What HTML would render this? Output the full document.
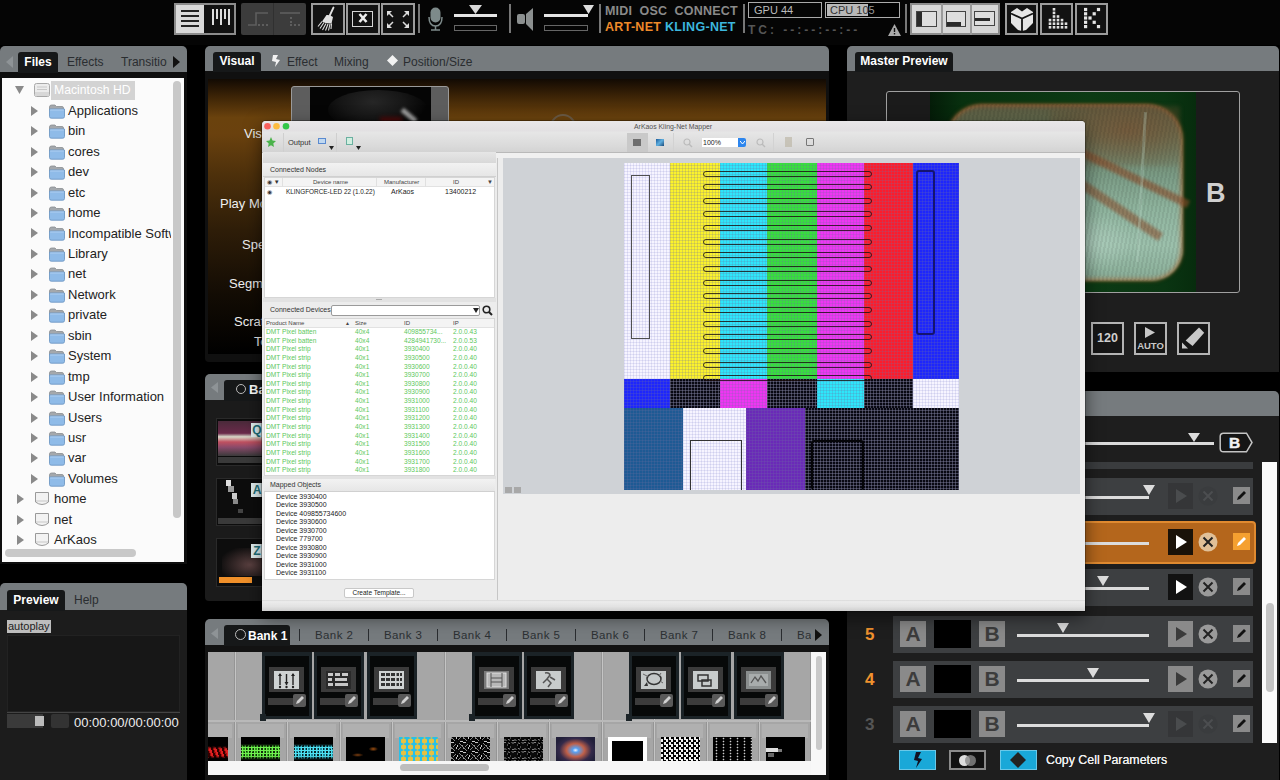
<!DOCTYPE html>
<html><head><meta charset="utf-8">
<style>
*{margin:0;padding:0;box-sizing:border-box}
html,body{width:1280px;height:780px;overflow:hidden;background:#000;font-family:"Liberation Sans",sans-serif}
.a{position:absolute}
.hdr{position:absolute;background:#767b7e;border-radius:5px 5px 0 0}
.tab{position:absolute;background:#161819;color:#fff;font-weight:bold;font-size:12px;text-align:center;border-radius:3px 3px 0 0}
.tt{position:absolute;color:#2a2d30;font-size:12px}
.tb{position:absolute;border:2px solid #9c9c9c;background:#121212}
</style></head><body>
<!-- ============ TOP TOOLBAR ============ -->
<div class="a" style="left:0;top:0;width:1280px;height:45px;background:#050505"></div>
<!-- group1 -->
<div class="a" style="left:174px;top:3px;width:62px;height:32px;border:2px solid #8c8c8c;background:#111"></div>
<div class="a" style="left:176px;top:5px;width:28px;height:28px;background:#d9d9d9"></div>
<div class="a" style="left:181px;top:10px;width:18px;height:2px;background:#222"></div>
<div class="a" style="left:181px;top:15px;width:18px;height:2px;background:#222"></div>
<div class="a" style="left:181px;top:20px;width:18px;height:2px;background:#222"></div>
<div class="a" style="left:181px;top:25px;width:18px;height:2px;background:#222"></div>
<div class="a" style="left:212px;top:9px;width:2px;height:16px;background:#ddd"></div>
<div class="a" style="left:216px;top:9px;width:2px;height:10px;background:#ddd"></div>
<div class="a" style="left:220px;top:9px;width:2px;height:16px;background:#ddd"></div>
<div class="a" style="left:224px;top:9px;width:2px;height:10px;background:#ddd"></div>
<div class="a" style="left:228px;top:9px;width:2px;height:16px;background:#ddd"></div>
<!-- group2 disabled -->
<div class="a" style="left:241px;top:3px;width:65px;height:32px;background:#3c3c3c;border-radius:2px"></div>
<div class="a" style="left:273px;top:3px;width:1px;height:32px;background:#303030"></div>
<svg class="a" style="left:241px;top:3px" width="65" height="32"><g stroke="#5e5e5e" stroke-width="1.6" fill="none"><path d="M7 22 L15 22 L15 10 L27 10"/><path d="M39 10 L59 10"/></g><g fill="#5e5e5e"><rect x="17" y="21" width="2" height="2"/><rect x="21" y="21" width="2" height="2"/><rect x="25" y="21" width="2" height="2"/><rect x="49" y="14" width="2" height="2"/><rect x="49" y="18" width="2" height="2"/><rect x="49" y="21" width="2" height="2"/><rect x="53" y="21" width="2" height="2"/><rect x="57" y="21" width="2" height="2"/></g></svg>
<!-- broom, x, expand -->
<div class="tb" style="left:311px;top:3px;width:34px;height:32px"></div>
<svg class="a" style="left:311px;top:3px" width="34" height="32"><path d="M22.5 4.5 L18.5 13" stroke="#e0e0e0" stroke-width="1.8" stroke-linecap="round"/><path d="M15.5 12 Q19 11.5 22 14 L20.5 20.5 Q15 21 11 18.5 Z" fill="#e0e0e0"/><g stroke="#e0e0e0" stroke-width="1.1"><path d="M11 18.5 L7 23.5 M13 19.5 L9 25.5 M15 20.5 L11.5 27 M17 21 L14.5 27.5 M19 21 L17.5 27.5 M20.5 20.5 L20 26"/></g></svg>
<div class="tb" style="left:346px;top:3px;width:34px;height:32px"></div>
<div class="a" style="left:352px;top:11px;width:21px;height:16px;border:1.6px solid #d6d6d6"></div>
<svg class="a" style="left:346px;top:3px" width="34" height="32"><path d="M13.5 11 L20.5 19 M20.5 11 L13.5 19" stroke="#eee" stroke-width="2.6"/></svg>
<div class="tb" style="left:381px;top:3px;width:34px;height:32px"></div>
<svg class="a" style="left:381px;top:3px" width="34" height="32"><g stroke="#dedede" stroke-width="1.5" fill="none"><path d="M7 9 L12 14 M27 9 L22 14 M7 24 L12 19 M27 24 L22 19"/></g><g fill="#dedede"><path d="M6 8 L11 8 L6 13 Z"/><path d="M28 8 L23 8 L28 13 Z"/><path d="M6 25 L11 25 L6 20 Z"/><path d="M28 25 L23 25 L28 20 Z"/></g></svg>
<div class="a" style="left:418px;top:4px;width:2px;height:29px;background:#777"></div>
<!-- mic -->
<svg class="a" style="left:426px;top:6px" width="20" height="26"><rect x="4.5" y="1.5" width="10" height="15" rx="5" fill="#7d8a8a"/><path d="M3 11 Q3 20 9.5 20 Q16 20 16 11" stroke="#7d8a8a" stroke-width="1.5" fill="none"/><path d="M9.5 20 L9.5 24 M5 24 L14 24" stroke="#7d8a8a" stroke-width="1.5"/></svg>
<div class="a" style="left:454px;top:14px;width:43px;height:3px;background:#e6e6e6"></div>
<svg class="a" style="left:469px;top:5px" width="13" height="9"><path d="M0 0 L13 0 L6.5 9 Z" fill="#d8d8d8"/></svg>
<div class="a" style="left:454px;top:25px;width:43px;height:6px;border:1px solid #666"></div>
<div class="a" style="left:509px;top:4px;width:2px;height:29px;background:#777"></div>
<!-- speaker -->
<svg class="a" style="left:516px;top:6px" width="20" height="26"><rect x="1" y="8" width="8" height="10" rx="2" fill="#8c9090"/><path d="M10 8 L17 2 L17 25 L10 18 Z" fill="#8c9090"/></svg>
<div class="a" style="left:544px;top:14px;width:44px;height:3px;background:#e6e6e6"></div>
<svg class="a" style="left:583px;top:5px" width="12" height="10"><path d="M0 0 L11 0 L5.5 9 Z" fill="#ddd"/></svg>
<div class="a" style="left:544px;top:25px;width:44px;height:6px;border:1px solid #666"></div>
<div class="a" style="left:599px;top:4px;width:2px;height:29px;background:#777"></div>
<div class="a" style="left:605px;top:4px;font-size:12.5px;font-weight:bold;color:#8a8a8a;letter-spacing:0.2px;white-space:nowrap">MIDI&nbsp; OSC&nbsp; CONNECT</div>
<div class="a" style="left:605px;top:20px;font-size:12.5px;font-weight:bold;color:#f08a2a;letter-spacing:0.3px;white-space:nowrap">ART-NET <span style="color:#3cb7de">KLING-NET</span></div>
<div class="a" style="left:743px;top:4px;width:2px;height:29px;background:#777"></div>
<div class="a" style="left:748px;top:2px;width:74px;height:16px;border:1px solid #aaa;color:#bbb;font-size:11px;line-height:14px;padding-left:5px">GPU 44</div>
<div class="a" style="left:825px;top:2px;width:75px;height:16px;border:1px solid #aaa;background:#000"></div>
<div class="a" style="left:827px;top:4px;width:41px;height:12px;background:#b8b8b8"></div>
<div class="a" style="left:825px;top:2px;width:75px;height:16px;color:#333;font-size:11px;line-height:16px;padding-left:5px">CPU 10<span style="color:#999">5</span></div>
<div class="a" style="left:748px;top:23px;font-size:12px;color:#555;font-weight:bold;letter-spacing:3px;white-space:nowrap">TC: --:--:--:--</div>
<svg class="a" style="left:888px;top:24px" width="13" height="12"><path d="M6.5 0 L13 12 L0 12 Z" fill="#aaa"/><rect x="5.8" y="4" width="1.4" height="4" fill="#111"/><rect x="5.8" y="9" width="1.4" height="1.4" fill="#111"/></svg>
<div class="a" style="left:905px;top:4px;width:2px;height:29px;background:#777"></div>
<!-- group3 -->
<div class="a" style="left:910px;top:3px;width:90px;height:32px;border:2px solid #8c8c8c;background:#d6d6d6"></div>
<div class="a" style="left:941px;top:3px;width:2px;height:32px;background:#9a9a9a"></div>
<div class="a" style="left:970px;top:3px;width:2px;height:32px;background:#9a9a9a"></div>
<div class="a" style="left:916px;top:11px;width:21px;height:16px;border:1px solid #444;background:#dedede"></div>
<div class="a" style="left:917px;top:12px;width:5px;height:14px;background:#2a2a2a"></div>
<div class="a" style="left:946px;top:11px;width:20px;height:16px;border:1px solid #444;background:#dedede"></div>
<div class="a" style="left:947px;top:22px;width:14px;height:4px;background:#2a2a2a"></div>
<div class="a" style="left:974px;top:11px;width:21px;height:15px;border:1px solid #444;background:#dedede"></div>
<div class="a" style="left:975px;top:18px;width:15px;height:3px;background:#2a2a2a"></div>
<div class="tb" style="left:1005px;top:3px;width:33px;height:32px"></div>
<svg class="a" style="left:1005px;top:3px" width="33" height="32"><path d="M6 9 L12 5 L17 8.5 L22 5 L28 9 L28 20 L21 27 L17 28 L13 27 L6 20 Z" fill="#e6e6e6"/><path d="M6 10.5 L17 15.5 L28 10.5 M17 15.5 L17 28" stroke="#151515" stroke-width="1.8" fill="none"/></svg>
<div class="tb" style="left:1040px;top:3px;width:33px;height:32px"></div>
<svg class="a" style="left:1040px;top:3px" width="33" height="32"><g fill="#e0e0e0"><rect x="8.7" y="23.0" width="2.6" height="2.6"/><rect x="8.7" y="19.4" width="2.6" height="2.6"/><rect x="8.7" y="15.8" width="2.6" height="2.6"/><rect x="12.7" y="23.0" width="2.6" height="2.6"/><rect x="12.7" y="19.4" width="2.6" height="2.6"/><rect x="12.7" y="15.8" width="2.6" height="2.6"/><rect x="12.7" y="12.2" width="2.6" height="2.6"/><rect x="12.7" y="8.6" width="2.6" height="2.6"/><rect x="12.7" y="5.0" width="2.6" height="2.6"/><rect x="16.7" y="23.0" width="2.6" height="2.6"/><rect x="16.7" y="19.4" width="2.6" height="2.6"/><rect x="16.7" y="15.8" width="2.6" height="2.6"/><rect x="16.7" y="12.2" width="2.6" height="2.6"/><rect x="20.7" y="23.0" width="2.6" height="2.6"/><rect x="20.7" y="19.4" width="2.6" height="2.6"/><rect x="20.7" y="15.8" width="2.6" height="2.6"/><rect x="24.7" y="23.0" width="2.6" height="2.6"/><rect x="24.7" y="19.4" width="2.6" height="2.6"/></g></svg>
<div class="tb" style="left:1075px;top:3px;width:33px;height:32px"></div>
<svg class="a" style="left:1075px;top:3px" width="33" height="32"><g fill="#e6e6e6"><rect x="9.0" y="4.9" width="3.2" height="3.2"/><rect x="9.0" y="9.2" width="3.2" height="3.2"/><rect x="9.0" y="13.4" width="3.2" height="3.2"/><rect x="9.0" y="17.7" width="3.2" height="3.2"/><rect x="9.0" y="22.0" width="3.2" height="3.2"/><rect x="13.4" y="13.4" width="3.2" height="3.2"/><rect x="17.6" y="9.2" width="3.2" height="3.2"/><rect x="21.9" y="4.9" width="3.2" height="3.2"/><rect x="17.6" y="17.7" width="3.2" height="3.2"/><rect x="21.9" y="22.0" width="3.2" height="3.2"/></g></svg>

<!-- ============ LEFT FILES PANEL ============ -->
<div class="hdr" style="left:0;top:46px;width:187px;height:27px"></div>
<div class="a" style="left:0;top:72px;width:187px;height:492px;background:#0e0e0e"></div>
<svg class="a" style="left:6px;top:56px" width="8" height="12"><path d="M7 0 L0 6 L7 12 Z" fill="#8e9396"/></svg>
<div class="tab" style="left:18px;top:52px;width:40px;height:21px;line-height:20px">Files</div>
<div class="tt" style="left:67px;top:55px">Effects</div>
<div class="tt" style="left:121px;top:55px">Transition</div>
<div class="a" style="left:167px;top:52px;width:18px;height:20px;background:#767b7e"></div>
<svg class="a" style="left:173px;top:56px" width="7" height="12"><path d="M0 0 L7 6 L0 12 Z" fill="#111"/></svg>
<div class="a" style="left:2px;top:78px;width:182px;height:484px;background:#fbfbfb"></div>
<div class="a" style="left:173px;top:81px;width:8px;height:437px;background:#c8c8c8;border-radius:4px"></div>
<div class="a" style="left:5px;top:549px;width:131px;height:8px;background:#c8c8c8;border-radius:4px"></div>
<div class="a" style="left:0;top:0;width:171px;height:548px;overflow:hidden">
<svg class="a" style="left:15px;top:86px" width="10" height="9"><path d="M0 0 L9 0 L4.5 8 Z" fill="#8a8a8a"/></svg>
<svg class="a" style="left:34px;top:83px" width="16" height="14"><rect x="0.5" y="0.5" width="15" height="13" rx="2" fill="#ececec" stroke="#a8a8a8"/><path d="M3 4 L13 4 M3 6.5 L13 6.5" stroke="#c8c8c8" stroke-width="1"/><rect x="1" y="9" width="14" height="4" fill="#d8d8d8"/></svg>
<div class="a" style="left:51px;top:81px;width:84px;height:19px;background:#d3d3d3"></div>
<div class="a" style="left:54px;top:82px;font-size:12.2px;color:#fff;white-space:nowrap;line-height:17px">Macintosh HD</div>
<svg class="a" style="left:31px;top:106px" width="8" height="10"><path d="M0 0 L7 5 L0 10 Z" fill="#8a8a8a"/></svg>
<svg class="a" style="left:49px;top:104px" width="16" height="15"><path d="M0.5 3 Q0.5 1 2.5 1 L6 1 L7.5 2.5 L13 2.5 Q14.5 2.5 14.5 4 L14.5 6 L0.5 6 Z" fill="#a4a8ac" stroke="#8a8e92" stroke-width="0.8"/><path d="M0.5 5 L15.5 5 L15.5 12.5 Q15.5 14.2 13.8 14.2 L2.2 14.2 Q0.5 14.2 0.5 12.5 Z" fill="#8fbbe8" stroke="#6f98c4" stroke-width="0.9"/><path d="M1.2 6 L14.8 6" stroke="#b4d4f4" stroke-width="0.9"/></svg>
<div class="a" style="left:68px;top:103px;font-size:13px;color:#222;white-space:nowrap;line-height:16px">Applications</div>
<svg class="a" style="left:31px;top:126px" width="8" height="10"><path d="M0 0 L7 5 L0 10 Z" fill="#8a8a8a"/></svg>
<svg class="a" style="left:49px;top:124px" width="16" height="15"><path d="M0.5 3 Q0.5 1 2.5 1 L6 1 L7.5 2.5 L13 2.5 Q14.5 2.5 14.5 4 L14.5 6 L0.5 6 Z" fill="#a4a8ac" stroke="#8a8e92" stroke-width="0.8"/><path d="M0.5 5 L15.5 5 L15.5 12.5 Q15.5 14.2 13.8 14.2 L2.2 14.2 Q0.5 14.2 0.5 12.5 Z" fill="#8fbbe8" stroke="#6f98c4" stroke-width="0.9"/><path d="M1.2 6 L14.8 6" stroke="#b4d4f4" stroke-width="0.9"/></svg>
<div class="a" style="left:68px;top:123px;font-size:13px;color:#222;white-space:nowrap;line-height:16px">bin</div>
<svg class="a" style="left:31px;top:147px" width="8" height="10"><path d="M0 0 L7 5 L0 10 Z" fill="#8a8a8a"/></svg>
<svg class="a" style="left:49px;top:145px" width="16" height="15"><path d="M0.5 3 Q0.5 1 2.5 1 L6 1 L7.5 2.5 L13 2.5 Q14.5 2.5 14.5 4 L14.5 6 L0.5 6 Z" fill="#a4a8ac" stroke="#8a8e92" stroke-width="0.8"/><path d="M0.5 5 L15.5 5 L15.5 12.5 Q15.5 14.2 13.8 14.2 L2.2 14.2 Q0.5 14.2 0.5 12.5 Z" fill="#8fbbe8" stroke="#6f98c4" stroke-width="0.9"/><path d="M1.2 6 L14.8 6" stroke="#b4d4f4" stroke-width="0.9"/></svg>
<div class="a" style="left:68px;top:144px;font-size:13px;color:#222;white-space:nowrap;line-height:16px">cores</div>
<svg class="a" style="left:31px;top:167px" width="8" height="10"><path d="M0 0 L7 5 L0 10 Z" fill="#8a8a8a"/></svg>
<svg class="a" style="left:49px;top:165px" width="16" height="15"><path d="M0.5 3 Q0.5 1 2.5 1 L6 1 L7.5 2.5 L13 2.5 Q14.5 2.5 14.5 4 L14.5 6 L0.5 6 Z" fill="#a4a8ac" stroke="#8a8e92" stroke-width="0.8"/><path d="M0.5 5 L15.5 5 L15.5 12.5 Q15.5 14.2 13.8 14.2 L2.2 14.2 Q0.5 14.2 0.5 12.5 Z" fill="#8fbbe8" stroke="#6f98c4" stroke-width="0.9"/><path d="M1.2 6 L14.8 6" stroke="#b4d4f4" stroke-width="0.9"/></svg>
<div class="a" style="left:68px;top:164px;font-size:13px;color:#222;white-space:nowrap;line-height:16px">dev</div>
<svg class="a" style="left:31px;top:188px" width="8" height="10"><path d="M0 0 L7 5 L0 10 Z" fill="#8a8a8a"/></svg>
<svg class="a" style="left:49px;top:186px" width="16" height="15"><path d="M0.5 3 Q0.5 1 2.5 1 L6 1 L7.5 2.5 L13 2.5 Q14.5 2.5 14.5 4 L14.5 6 L0.5 6 Z" fill="#a4a8ac" stroke="#8a8e92" stroke-width="0.8"/><path d="M0.5 5 L15.5 5 L15.5 12.5 Q15.5 14.2 13.8 14.2 L2.2 14.2 Q0.5 14.2 0.5 12.5 Z" fill="#8fbbe8" stroke="#6f98c4" stroke-width="0.9"/><path d="M1.2 6 L14.8 6" stroke="#b4d4f4" stroke-width="0.9"/></svg>
<div class="a" style="left:68px;top:185px;font-size:13px;color:#222;white-space:nowrap;line-height:16px">etc</div>
<svg class="a" style="left:31px;top:208px" width="8" height="10"><path d="M0 0 L7 5 L0 10 Z" fill="#8a8a8a"/></svg>
<svg class="a" style="left:49px;top:206px" width="16" height="15"><path d="M0.5 3 Q0.5 1 2.5 1 L6 1 L7.5 2.5 L13 2.5 Q14.5 2.5 14.5 4 L14.5 6 L0.5 6 Z" fill="#a4a8ac" stroke="#8a8e92" stroke-width="0.8"/><path d="M0.5 5 L15.5 5 L15.5 12.5 Q15.5 14.2 13.8 14.2 L2.2 14.2 Q0.5 14.2 0.5 12.5 Z" fill="#8fbbe8" stroke="#6f98c4" stroke-width="0.9"/><path d="M1.2 6 L14.8 6" stroke="#b4d4f4" stroke-width="0.9"/></svg>
<div class="a" style="left:68px;top:205px;font-size:13px;color:#222;white-space:nowrap;line-height:16px">home</div>
<svg class="a" style="left:31px;top:228px" width="8" height="10"><path d="M0 0 L7 5 L0 10 Z" fill="#8a8a8a"/></svg>
<svg class="a" style="left:49px;top:226px" width="16" height="15"><path d="M0.5 3 Q0.5 1 2.5 1 L6 1 L7.5 2.5 L13 2.5 Q14.5 2.5 14.5 4 L14.5 6 L0.5 6 Z" fill="#a4a8ac" stroke="#8a8e92" stroke-width="0.8"/><path d="M0.5 5 L15.5 5 L15.5 12.5 Q15.5 14.2 13.8 14.2 L2.2 14.2 Q0.5 14.2 0.5 12.5 Z" fill="#8fbbe8" stroke="#6f98c4" stroke-width="0.9"/><path d="M1.2 6 L14.8 6" stroke="#b4d4f4" stroke-width="0.9"/></svg>
<div class="a" style="left:68px;top:226px;font-size:13px;color:#222;white-space:nowrap;line-height:16px">Incompatible Software</div>
<svg class="a" style="left:31px;top:249px" width="8" height="10"><path d="M0 0 L7 5 L0 10 Z" fill="#8a8a8a"/></svg>
<svg class="a" style="left:49px;top:247px" width="16" height="15"><path d="M0.5 3 Q0.5 1 2.5 1 L6 1 L7.5 2.5 L13 2.5 Q14.5 2.5 14.5 4 L14.5 6 L0.5 6 Z" fill="#a4a8ac" stroke="#8a8e92" stroke-width="0.8"/><path d="M0.5 5 L15.5 5 L15.5 12.5 Q15.5 14.2 13.8 14.2 L2.2 14.2 Q0.5 14.2 0.5 12.5 Z" fill="#8fbbe8" stroke="#6f98c4" stroke-width="0.9"/><path d="M1.2 6 L14.8 6" stroke="#b4d4f4" stroke-width="0.9"/></svg>
<div class="a" style="left:68px;top:246px;font-size:13px;color:#222;white-space:nowrap;line-height:16px">Library</div>
<svg class="a" style="left:31px;top:269px" width="8" height="10"><path d="M0 0 L7 5 L0 10 Z" fill="#8a8a8a"/></svg>
<svg class="a" style="left:49px;top:267px" width="16" height="15"><path d="M0.5 3 Q0.5 1 2.5 1 L6 1 L7.5 2.5 L13 2.5 Q14.5 2.5 14.5 4 L14.5 6 L0.5 6 Z" fill="#a4a8ac" stroke="#8a8e92" stroke-width="0.8"/><path d="M0.5 5 L15.5 5 L15.5 12.5 Q15.5 14.2 13.8 14.2 L2.2 14.2 Q0.5 14.2 0.5 12.5 Z" fill="#8fbbe8" stroke="#6f98c4" stroke-width="0.9"/><path d="M1.2 6 L14.8 6" stroke="#b4d4f4" stroke-width="0.9"/></svg>
<div class="a" style="left:68px;top:266px;font-size:13px;color:#222;white-space:nowrap;line-height:16px">net</div>
<svg class="a" style="left:31px;top:290px" width="8" height="10"><path d="M0 0 L7 5 L0 10 Z" fill="#8a8a8a"/></svg>
<svg class="a" style="left:49px;top:288px" width="16" height="15"><path d="M0.5 3 Q0.5 1 2.5 1 L6 1 L7.5 2.5 L13 2.5 Q14.5 2.5 14.5 4 L14.5 6 L0.5 6 Z" fill="#a4a8ac" stroke="#8a8e92" stroke-width="0.8"/><path d="M0.5 5 L15.5 5 L15.5 12.5 Q15.5 14.2 13.8 14.2 L2.2 14.2 Q0.5 14.2 0.5 12.5 Z" fill="#8fbbe8" stroke="#6f98c4" stroke-width="0.9"/><path d="M1.2 6 L14.8 6" stroke="#b4d4f4" stroke-width="0.9"/></svg>
<div class="a" style="left:68px;top:287px;font-size:13px;color:#222;white-space:nowrap;line-height:16px">Network</div>
<svg class="a" style="left:31px;top:310px" width="8" height="10"><path d="M0 0 L7 5 L0 10 Z" fill="#8a8a8a"/></svg>
<svg class="a" style="left:49px;top:308px" width="16" height="15"><path d="M0.5 3 Q0.5 1 2.5 1 L6 1 L7.5 2.5 L13 2.5 Q14.5 2.5 14.5 4 L14.5 6 L0.5 6 Z" fill="#a4a8ac" stroke="#8a8e92" stroke-width="0.8"/><path d="M0.5 5 L15.5 5 L15.5 12.5 Q15.5 14.2 13.8 14.2 L2.2 14.2 Q0.5 14.2 0.5 12.5 Z" fill="#8fbbe8" stroke="#6f98c4" stroke-width="0.9"/><path d="M1.2 6 L14.8 6" stroke="#b4d4f4" stroke-width="0.9"/></svg>
<div class="a" style="left:68px;top:307px;font-size:13px;color:#222;white-space:nowrap;line-height:16px">private</div>
<svg class="a" style="left:31px;top:331px" width="8" height="10"><path d="M0 0 L7 5 L0 10 Z" fill="#8a8a8a"/></svg>
<svg class="a" style="left:49px;top:329px" width="16" height="15"><path d="M0.5 3 Q0.5 1 2.5 1 L6 1 L7.5 2.5 L13 2.5 Q14.5 2.5 14.5 4 L14.5 6 L0.5 6 Z" fill="#a4a8ac" stroke="#8a8e92" stroke-width="0.8"/><path d="M0.5 5 L15.5 5 L15.5 12.5 Q15.5 14.2 13.8 14.2 L2.2 14.2 Q0.5 14.2 0.5 12.5 Z" fill="#8fbbe8" stroke="#6f98c4" stroke-width="0.9"/><path d="M1.2 6 L14.8 6" stroke="#b4d4f4" stroke-width="0.9"/></svg>
<div class="a" style="left:68px;top:328px;font-size:13px;color:#222;white-space:nowrap;line-height:16px">sbin</div>
<svg class="a" style="left:31px;top:351px" width="8" height="10"><path d="M0 0 L7 5 L0 10 Z" fill="#8a8a8a"/></svg>
<svg class="a" style="left:49px;top:349px" width="16" height="15"><path d="M0.5 3 Q0.5 1 2.5 1 L6 1 L7.5 2.5 L13 2.5 Q14.5 2.5 14.5 4 L14.5 6 L0.5 6 Z" fill="#a4a8ac" stroke="#8a8e92" stroke-width="0.8"/><path d="M0.5 5 L15.5 5 L15.5 12.5 Q15.5 14.2 13.8 14.2 L2.2 14.2 Q0.5 14.2 0.5 12.5 Z" fill="#8fbbe8" stroke="#6f98c4" stroke-width="0.9"/><path d="M1.2 6 L14.8 6" stroke="#b4d4f4" stroke-width="0.9"/></svg>
<div class="a" style="left:68px;top:348px;font-size:13px;color:#222;white-space:nowrap;line-height:16px">System</div>
<svg class="a" style="left:31px;top:372px" width="8" height="10"><path d="M0 0 L7 5 L0 10 Z" fill="#8a8a8a"/></svg>
<svg class="a" style="left:49px;top:370px" width="16" height="15"><path d="M0.5 3 Q0.5 1 2.5 1 L6 1 L7.5 2.5 L13 2.5 Q14.5 2.5 14.5 4 L14.5 6 L0.5 6 Z" fill="#a4a8ac" stroke="#8a8e92" stroke-width="0.8"/><path d="M0.5 5 L15.5 5 L15.5 12.5 Q15.5 14.2 13.8 14.2 L2.2 14.2 Q0.5 14.2 0.5 12.5 Z" fill="#8fbbe8" stroke="#6f98c4" stroke-width="0.9"/><path d="M1.2 6 L14.8 6" stroke="#b4d4f4" stroke-width="0.9"/></svg>
<div class="a" style="left:68px;top:369px;font-size:13px;color:#222;white-space:nowrap;line-height:16px">tmp</div>
<svg class="a" style="left:31px;top:392px" width="8" height="10"><path d="M0 0 L7 5 L0 10 Z" fill="#8a8a8a"/></svg>
<svg class="a" style="left:49px;top:390px" width="16" height="15"><path d="M0.5 3 Q0.5 1 2.5 1 L6 1 L7.5 2.5 L13 2.5 Q14.5 2.5 14.5 4 L14.5 6 L0.5 6 Z" fill="#a4a8ac" stroke="#8a8e92" stroke-width="0.8"/><path d="M0.5 5 L15.5 5 L15.5 12.5 Q15.5 14.2 13.8 14.2 L2.2 14.2 Q0.5 14.2 0.5 12.5 Z" fill="#8fbbe8" stroke="#6f98c4" stroke-width="0.9"/><path d="M1.2 6 L14.8 6" stroke="#b4d4f4" stroke-width="0.9"/></svg>
<div class="a" style="left:68px;top:389px;font-size:13px;color:#222;white-space:nowrap;line-height:16px">User Information</div>
<svg class="a" style="left:31px;top:413px" width="8" height="10"><path d="M0 0 L7 5 L0 10 Z" fill="#8a8a8a"/></svg>
<svg class="a" style="left:49px;top:411px" width="16" height="15"><path d="M0.5 3 Q0.5 1 2.5 1 L6 1 L7.5 2.5 L13 2.5 Q14.5 2.5 14.5 4 L14.5 6 L0.5 6 Z" fill="#a4a8ac" stroke="#8a8e92" stroke-width="0.8"/><path d="M0.5 5 L15.5 5 L15.5 12.5 Q15.5 14.2 13.8 14.2 L2.2 14.2 Q0.5 14.2 0.5 12.5 Z" fill="#8fbbe8" stroke="#6f98c4" stroke-width="0.9"/><path d="M1.2 6 L14.8 6" stroke="#b4d4f4" stroke-width="0.9"/></svg>
<div class="a" style="left:68px;top:410px;font-size:13px;color:#222;white-space:nowrap;line-height:16px">Users</div>
<svg class="a" style="left:31px;top:433px" width="8" height="10"><path d="M0 0 L7 5 L0 10 Z" fill="#8a8a8a"/></svg>
<svg class="a" style="left:49px;top:431px" width="16" height="15"><path d="M0.5 3 Q0.5 1 2.5 1 L6 1 L7.5 2.5 L13 2.5 Q14.5 2.5 14.5 4 L14.5 6 L0.5 6 Z" fill="#a4a8ac" stroke="#8a8e92" stroke-width="0.8"/><path d="M0.5 5 L15.5 5 L15.5 12.5 Q15.5 14.2 13.8 14.2 L2.2 14.2 Q0.5 14.2 0.5 12.5 Z" fill="#8fbbe8" stroke="#6f98c4" stroke-width="0.9"/><path d="M1.2 6 L14.8 6" stroke="#b4d4f4" stroke-width="0.9"/></svg>
<div class="a" style="left:68px;top:430px;font-size:13px;color:#222;white-space:nowrap;line-height:16px">usr</div>
<svg class="a" style="left:31px;top:453px" width="8" height="10"><path d="M0 0 L7 5 L0 10 Z" fill="#8a8a8a"/></svg>
<svg class="a" style="left:49px;top:451px" width="16" height="15"><path d="M0.5 3 Q0.5 1 2.5 1 L6 1 L7.5 2.5 L13 2.5 Q14.5 2.5 14.5 4 L14.5 6 L0.5 6 Z" fill="#a4a8ac" stroke="#8a8e92" stroke-width="0.8"/><path d="M0.5 5 L15.5 5 L15.5 12.5 Q15.5 14.2 13.8 14.2 L2.2 14.2 Q0.5 14.2 0.5 12.5 Z" fill="#8fbbe8" stroke="#6f98c4" stroke-width="0.9"/><path d="M1.2 6 L14.8 6" stroke="#b4d4f4" stroke-width="0.9"/></svg>
<div class="a" style="left:68px;top:450px;font-size:13px;color:#222;white-space:nowrap;line-height:16px">var</div>
<svg class="a" style="left:31px;top:474px" width="8" height="10"><path d="M0 0 L7 5 L0 10 Z" fill="#8a8a8a"/></svg>
<svg class="a" style="left:49px;top:472px" width="16" height="15"><path d="M0.5 3 Q0.5 1 2.5 1 L6 1 L7.5 2.5 L13 2.5 Q14.5 2.5 14.5 4 L14.5 6 L0.5 6 Z" fill="#a4a8ac" stroke="#8a8e92" stroke-width="0.8"/><path d="M0.5 5 L15.5 5 L15.5 12.5 Q15.5 14.2 13.8 14.2 L2.2 14.2 Q0.5 14.2 0.5 12.5 Z" fill="#8fbbe8" stroke="#6f98c4" stroke-width="0.9"/><path d="M1.2 6 L14.8 6" stroke="#b4d4f4" stroke-width="0.9"/></svg>
<div class="a" style="left:68px;top:471px;font-size:13px;color:#222;white-space:nowrap;line-height:16px">Volumes</div>
<svg class="a" style="left:17px;top:494px" width="8" height="10"><path d="M0 0 L7 5 L0 10 Z" fill="#8a8a8a"/></svg>
<svg class="a" style="left:34px;top:491px" width="16" height="16"><path d="M1.5 1.5 L14.5 1.5 L14.5 11 Q8 16 1.5 11 Z" fill="#f2f2f2" stroke="#9a9a9a" stroke-width="1"/><path d="M2 10 L14 10" stroke="#c8c8c8"/></svg>
<div class="a" style="left:54px;top:491px;font-size:13px;color:#222;white-space:nowrap;line-height:16px">home</div>
<svg class="a" style="left:17px;top:515px" width="8" height="10"><path d="M0 0 L7 5 L0 10 Z" fill="#8a8a8a"/></svg>
<svg class="a" style="left:34px;top:512px" width="16" height="16"><path d="M1.5 1.5 L14.5 1.5 L14.5 11 Q8 16 1.5 11 Z" fill="#f2f2f2" stroke="#9a9a9a" stroke-width="1"/><path d="M2 10 L14 10" stroke="#c8c8c8"/></svg>
<div class="a" style="left:54px;top:512px;font-size:13px;color:#222;white-space:nowrap;line-height:16px">net</div>
<svg class="a" style="left:17px;top:535px" width="8" height="10"><path d="M0 0 L7 5 L0 10 Z" fill="#8a8a8a"/></svg>
<svg class="a" style="left:34px;top:532px" width="16" height="16"><path d="M1.5 1.5 L14.5 1.5 L14.5 11 Q8 16 1.5 11 Z" fill="#f2f2f2" stroke="#9a9a9a" stroke-width="1"/><path d="M2 10 L14 10" stroke="#c8c8c8"/></svg>
<div class="a" style="left:54px;top:532px;font-size:13px;color:#222;white-space:nowrap;line-height:16px">ArKaos</div>
</div>

<!-- ============ PREVIEW PANEL ============ -->
<div class="hdr" style="left:0;top:583px;width:187px;height:28px"></div>
<div class="a" style="left:0;top:610px;width:187px;height:170px;background:#1c1c1c"></div>
<div class="tab" style="left:7px;top:590px;width:58px;height:21px;line-height:20px">Preview</div>
<div class="tt" style="left:74px;top:593px">Help</div>
<div class="a" style="left:7px;top:620px;width:44px;height:13px;background:#bdbdbd;color:#222;font-size:11px;line-height:13px;padding-left:1px">autoplay</div>
<div class="a" style="left:7px;top:635px;width:173px;height:77px;background:#171717;border:1px solid #222"></div>
<div class="a" style="left:7px;top:712px;width:173px;height:1px;background:#444"></div>
<div class="a" style="left:7px;top:714px;width:36px;height:14px;background:#3a3a3a"></div>
<div class="a" style="left:35px;top:716px;width:9px;height:10px;background:#bbb"></div>
<div class="a" style="left:51px;top:714px;width:18px;height:14px;background:#333;border-radius:2px"></div>
<div class="a" style="left:74px;top:715px;font-size:13px;color:#eee;white-space:nowrap">00:00:00/00:00:00</div>
<!-- ============ VISUAL PANEL ============ -->
<div class="hdr" style="left:205px;top:46px;width:624px;height:26px"></div>
<div class="a" style="left:205px;top:71px;width:624px;height:291px;background:#101010;border-radius:0 0 4px 4px"></div>
<div class="a" style="left:208px;top:79px;width:618px;height:275px;background:linear-gradient(180deg,#120a03 0%,#3a2206 6%,#6a420d 14%,#6a410e 20%,#4d300b 35%,#2e1d08 55%,#130c04 78%,#000 100%)"></div>
<div class="tab" style="left:213px;top:52px;width:48px;height:20px;line-height:19px">Visual</div>
<svg class="a" style="left:272px;top:55px" width="9" height="12"><path d="M1 0 L6 0 L4 4 L8 5 L3 12 L4 7 L0 6 Z" fill="#f2f2f2"/></svg>
<div class="tt" style="left:287px;top:55px">Effect</div>
<div class="tt" style="left:334px;top:55px">Mixing</div>
<svg class="a" style="left:387px;top:55px" width="11" height="11"><path d="M5.5 0 L11 5.5 L5.5 11 L0 5.5 Z" fill="#f2f2f2"/></svg>
<div class="tt" style="left:403px;top:55px">Position/Size</div>
<div class="a" style="left:291px;top:86px;width:158px;height:40px;background:#5d5d5d;border:1px solid #9a9a9a;border-radius:3px"></div>
<div class="a" style="left:310px;top:87px;width:121px;height:40px;background:#050505;overflow:hidden">
<div class="a" style="left:18px;top:3px;width:100px;height:40px;border-radius:50%;background:radial-gradient(ellipse at 45% 30%,#262626 0%,#161616 40%,transparent 70%)"></div>
<div class="a" style="left:90px;top:26px;width:18px;height:5px;background:#9a9a9a;transform:rotate(40deg);filter:blur(1.5px)"></div>
<div class="a" style="left:70px;top:30px;width:22px;height:6px;background:#4a0a0a;filter:blur(2px)"></div>
</div>
<div class="a" style="left:550px;top:114px;width:26px;height:26px;border:2px solid #6a5a45;border-radius:50%"></div>
<div class="a" style="left:244px;top:126px;font-size:13px;color:#f0f0f0;white-space:nowrap">Visual</div>
<div class="a" style="left:220px;top:196px;font-size:13px;color:#f0f0f0;white-space:nowrap">Play Mode</div>
<div class="a" style="left:242px;top:237px;font-size:13px;color:#f0f0f0;white-space:nowrap">Speed</div>
<div class="a" style="left:229px;top:276px;font-size:13px;color:#f0f0f0;white-space:nowrap">Segment</div>
<div class="a" style="left:234px;top:314px;font-size:13px;color:#f0f0f0;white-space:nowrap">Scratch</div>
<div class="a" style="left:254px;top:334px;font-size:13px;color:#f0f0f0;white-space:nowrap">To</div>

<!-- ============ BANK PANEL (behind) ============ -->
<div class="hdr" style="left:205px;top:374px;width:624px;height:27px"></div>
<div class="a" style="left:205px;top:400px;width:624px;height:201px;background:#1b1b1b;border-radius:0 0 4px 4px"></div>
<svg class="a" style="left:211px;top:382px" width="7" height="11"><path d="M7 0 L0 5.5 L7 11 Z" fill="#8e9396"/></svg>
<div class="tab" style="left:224px;top:380px;width:80px;height:21px"></div>
<div class="a" style="left:236px;top:384px;width:10px;height:10px;border:1.5px solid #bbb;border-radius:50%"></div>
<div class="a" style="left:249px;top:382px;font-size:13px;font-weight:bold;color:#fff">Bank</div>
<!-- cell Q -->
<div class="a" style="left:216px;top:418px;width:60px;height:48px;background:#0d0d0d;border:1px solid #2a2a2a"></div>
<div class="a" style="left:218px;top:421px;width:50px;height:35px;background:linear-gradient(180deg,#4a2a3a 0%,#6a2a4a 35%,#d8d8c8 45%,#c05060 60%,#8a4a6a 75%,#3a3a3a 100%)"></div>
<div class="a" style="left:218px;top:457px;width:46px;height:6px;background:#3a3a3a"></div>
<div class="a" style="left:251px;top:423px;width:12px;height:14px;background:#e2f0f2;color:#20707a;font-weight:bold;font-size:12px;line-height:14px;text-align:center">Q</div>
<!-- cell A -->
<div class="a" style="left:216px;top:478px;width:60px;height:48px;background:#0d0d0d;border:1px solid #2a2a2a"></div>
<div class="a" style="left:226px;top:480px;width:5px;height:6px;background:#ddd"></div>
<div class="a" style="left:228px;top:486px;width:6px;height:6px;background:#999"></div>
<div class="a" style="left:232px;top:493px;width:5px;height:6px;background:#ccc"></div>
<div class="a" style="left:233px;top:499px;width:5px;height:5px;background:#888"></div>
<div class="a" style="left:238px;top:509px;width:5px;height:4px;background:#444"></div>
<div class="a" style="left:218px;top:518px;width:46px;height:6px;background:#3a3a3a"></div>
<div class="a" style="left:251px;top:483px;width:12px;height:14px;background:#e2f0f2;color:#20707a;font-weight:bold;font-size:12px;line-height:14px;text-align:center">A</div>
<!-- cell Z -->
<div class="a" style="left:216px;top:538px;width:60px;height:49px;background:#0d0d0d;border:1px solid #2a2a2a"></div>
<div class="a" style="left:222px;top:548px;width:40px;height:28px;background:radial-gradient(ellipse at 70% 60%,#5a4040 0%,#2a2020 50%,#0d0d0d 80%)"></div>
<div class="a" style="left:219px;top:577px;width:33px;height:6px;background:#f0902a"></div>
<div class="a" style="left:251px;top:544px;width:12px;height:14px;background:#e2f0f2;color:#20707a;font-weight:bold;font-size:12px;line-height:14px;text-align:center">Z</div>
<!-- ============ BANK PANEL (bottom) ============ -->
<div class="hdr" style="left:205px;top:619px;width:624px;height:27px"></div>
<div class="a" style="left:205px;top:645px;width:624px;height:135px;background:#121212"></div>
<svg class="a" style="left:211px;top:628px" width="7" height="11"><path d="M7 0 L0 5.5 L7 11 Z" fill="#8e9396"/></svg>
<div class="tab" style="left:224px;top:625px;width:66px;height:21px"></div>
<div class="a" style="left:235px;top:629px;width:11px;height:11px;border:1.5px solid #bbb;border-radius:50%"></div>
<div class="a" style="left:248px;top:629px;font-size:12px;font-weight:bold;color:#fff;white-space:nowrap">Bank 1</div>
<div class="tt" style="left:315px;top:629px;font-size:11.5px;letter-spacing:0.4px;color:#2c3033;white-space:nowrap">Bank 2</div>
<div class="tt" style="left:384px;top:629px;font-size:11.5px;letter-spacing:0.4px;color:#2c3033;white-space:nowrap">Bank 3</div>
<div class="tt" style="left:453px;top:629px;font-size:11.5px;letter-spacing:0.4px;color:#2c3033;white-space:nowrap">Bank 4</div>
<div class="tt" style="left:522px;top:629px;font-size:11.5px;letter-spacing:0.4px;color:#2c3033;white-space:nowrap">Bank 5</div>
<div class="tt" style="left:591px;top:629px;font-size:11.5px;letter-spacing:0.4px;color:#2c3033;white-space:nowrap">Bank 6</div>
<div class="tt" style="left:660px;top:629px;font-size:11.5px;letter-spacing:0.4px;color:#2c3033;white-space:nowrap">Bank 7</div>
<div class="tt" style="left:728px;top:629px;font-size:11.5px;letter-spacing:0.4px;color:#2c3033;white-space:nowrap">Bank 8</div>
<div class="a" style="left:299px;top:629px;width:1px;height:12px;background:#2a2d30"></div>
<div class="a" style="left:368px;top:629px;width:1px;height:12px;background:#2a2d30"></div>
<div class="a" style="left:437px;top:629px;width:1px;height:12px;background:#2a2d30"></div>
<div class="a" style="left:506px;top:629px;width:1px;height:12px;background:#2a2d30"></div>
<div class="a" style="left:575px;top:629px;width:1px;height:12px;background:#2a2d30"></div>
<div class="a" style="left:644px;top:629px;width:1px;height:12px;background:#2a2d30"></div>
<div class="a" style="left:712px;top:629px;width:1px;height:12px;background:#2a2d30"></div>
<div class="a" style="left:781px;top:629px;width:1px;height:12px;background:#2a2d30"></div>
<div class="a" style="left:797px;top:629px;width:14px;overflow:hidden;font-size:11.5px;letter-spacing:0.4px;color:#2c3033;white-space:nowrap">Bank</div>
<svg class="a" style="left:815px;top:629px" width="7" height="12"><path d="M0 0 L7 6 L0 12 Z" fill="#111"/></svg>
<div class="a" style="left:208px;top:652px;width:603px;height:109px;background:#a6a6a6;overflow:hidden">
<div class="a" style="left:-26px;top:69px;width:3px;height:40px;background:linear-gradient(90deg,#7d7d7d,#c4c4c4,#8e8e8e)"></div>
<div class="a" style="left:26px;top:69px;width:3px;height:40px;background:linear-gradient(90deg,#7d7d7d,#c4c4c4,#8e8e8e)"></div>
<div class="a" style="left:78px;top:69px;width:3px;height:40px;background:linear-gradient(90deg,#7d7d7d,#c4c4c4,#8e8e8e)"></div>
<div class="a" style="left:131px;top:69px;width:3px;height:40px;background:linear-gradient(90deg,#7d7d7d,#c4c4c4,#8e8e8e)"></div>
<div class="a" style="left:183px;top:69px;width:3px;height:40px;background:linear-gradient(90deg,#7d7d7d,#c4c4c4,#8e8e8e)"></div>
<div class="a" style="left:236px;top:69px;width:3px;height:40px;background:linear-gradient(90deg,#7d7d7d,#c4c4c4,#8e8e8e)"></div>
<div class="a" style="left:288px;top:69px;width:3px;height:40px;background:linear-gradient(90deg,#7d7d7d,#c4c4c4,#8e8e8e)"></div>
<div class="a" style="left:340px;top:69px;width:3px;height:40px;background:linear-gradient(90deg,#7d7d7d,#c4c4c4,#8e8e8e)"></div>
<div class="a" style="left:393px;top:69px;width:3px;height:40px;background:linear-gradient(90deg,#7d7d7d,#c4c4c4,#8e8e8e)"></div>
<div class="a" style="left:445px;top:69px;width:3px;height:40px;background:linear-gradient(90deg,#7d7d7d,#c4c4c4,#8e8e8e)"></div>
<div class="a" style="left:498px;top:69px;width:3px;height:40px;background:linear-gradient(90deg,#7d7d7d,#c4c4c4,#8e8e8e)"></div>
<div class="a" style="left:550px;top:69px;width:3px;height:40px;background:linear-gradient(90deg,#7d7d7d,#c4c4c4,#8e8e8e)"></div>
<div class="a" style="left:602px;top:69px;width:3px;height:40px;background:linear-gradient(90deg,#7d7d7d,#c4c4c4,#8e8e8e)"></div>
<div class="a" style="left:655px;top:69px;width:3px;height:40px;background:linear-gradient(90deg,#7d7d7d,#c4c4c4,#8e8e8e)"></div>
<div class="a" style="left:-26px;top:0px;width:3px;height:69px;background:linear-gradient(90deg,#7d7d7d,#c4c4c4,#8e8e8e)"></div>
<div class="a" style="left:26px;top:0px;width:3px;height:69px;background:linear-gradient(90deg,#7d7d7d,#c4c4c4,#8e8e8e)"></div>
<div class="a" style="left:78px;top:0px;width:3px;height:69px;background:linear-gradient(90deg,#7d7d7d,#c4c4c4,#8e8e8e)"></div>
<div class="a" style="left:131px;top:0px;width:3px;height:69px;background:linear-gradient(90deg,#7d7d7d,#c4c4c4,#8e8e8e)"></div>
<div class="a" style="left:183px;top:0px;width:3px;height:69px;background:linear-gradient(90deg,#7d7d7d,#c4c4c4,#8e8e8e)"></div>
<div class="a" style="left:236px;top:0px;width:3px;height:69px;background:linear-gradient(90deg,#7d7d7d,#c4c4c4,#8e8e8e)"></div>
<div class="a" style="left:288px;top:0px;width:3px;height:69px;background:linear-gradient(90deg,#7d7d7d,#c4c4c4,#8e8e8e)"></div>
<div class="a" style="left:340px;top:0px;width:3px;height:69px;background:linear-gradient(90deg,#7d7d7d,#c4c4c4,#8e8e8e)"></div>
<div class="a" style="left:393px;top:0px;width:3px;height:69px;background:linear-gradient(90deg,#7d7d7d,#c4c4c4,#8e8e8e)"></div>
<div class="a" style="left:445px;top:0px;width:3px;height:69px;background:linear-gradient(90deg,#7d7d7d,#c4c4c4,#8e8e8e)"></div>
<div class="a" style="left:498px;top:0px;width:3px;height:69px;background:linear-gradient(90deg,#7d7d7d,#c4c4c4,#8e8e8e)"></div>
<div class="a" style="left:550px;top:0px;width:3px;height:69px;background:linear-gradient(90deg,#7d7d7d,#c4c4c4,#8e8e8e)"></div>
<div class="a" style="left:602px;top:0px;width:3px;height:69px;background:linear-gradient(90deg,#7d7d7d,#c4c4c4,#8e8e8e)"></div>
<div class="a" style="left:655px;top:0px;width:3px;height:69px;background:linear-gradient(90deg,#7d7d7d,#c4c4c4,#8e8e8e)"></div>
<div class="a" style="left:0;top:68px;width:603px;height:2px;background:#b9b9b9"></div>
<div class="a" style="left:-22px;top:72px;width:46px;height:14px;background:#b0b0b0"></div>
<div class="a" style="left:30px;top:72px;width:46px;height:14px;background:#b0b0b0"></div>
<div class="a" style="left:82px;top:72px;width:46px;height:14px;background:#b0b0b0"></div>
<div class="a" style="left:135px;top:72px;width:46px;height:14px;background:#b0b0b0"></div>
<div class="a" style="left:187px;top:72px;width:46px;height:14px;background:#b0b0b0"></div>
<div class="a" style="left:240px;top:72px;width:46px;height:14px;background:#b0b0b0"></div>
<div class="a" style="left:292px;top:72px;width:46px;height:14px;background:#b0b0b0"></div>
<div class="a" style="left:344px;top:72px;width:46px;height:14px;background:#b0b0b0"></div>
<div class="a" style="left:397px;top:72px;width:46px;height:14px;background:#b0b0b0"></div>
<div class="a" style="left:449px;top:72px;width:46px;height:14px;background:#b0b0b0"></div>
<div class="a" style="left:502px;top:72px;width:46px;height:14px;background:#b0b0b0"></div>
<div class="a" style="left:554px;top:72px;width:46px;height:14px;background:#b0b0b0"></div>
<div class="a" style="left:606px;top:72px;width:46px;height:14px;background:#b0b0b0"></div>
<div class="a" style="left:54px;top:0px;width:50px;height:67px;background:#070909;border:3px solid #1b2327;border-top-width:4px"></div>
<div class="a" style="left:61px;top:15px;width:35px;height:25px;background:#3b3b3b"></div>
<svg class="a" style="left:66px;top:19px" width="25" height="18"><rect width="25" height="18" fill="#cfd3d3"/><g stroke="#222" stroke-width="1.4"><path d="M6 3 L6 14 M12.5 3 L12.5 14 M19 3 L19 14"/></g><g fill="#222"><path d="M4 5 L6 2 L8 5 Z M10.5 11 L12.5 14 L14.5 11 Z M17 5 L19 2 L21 5 Z"/><circle cx="6" cy="16" r="1.2"/><circle cx="12.5" cy="16" r="1.2"/><circle cx="19" cy="16" r="1.2"/></g></svg>
<div class="a" style="left:60px;top:46px;width:25px;height:7px;background:#3c3c3c"></div>
<div class="a" style="left:85px;top:42px;width:13px;height:13px;background:#595959;border-radius:2px"></div>
<svg class="a" style="left:86px;top:43px" width="11" height="11"><path d="M2 9 L3 6 L8 1 L10 3 L5 8 Z" fill="#d0d0d0"/></svg>
<div class="a" style="left:106px;top:0px;width:50px;height:67px;background:#070909;border:3px solid #1b2327;border-top-width:4px"></div>
<div class="a" style="left:113px;top:15px;width:35px;height:25px;background:#3b3b3b"></div>
<svg class="a" style="left:118px;top:19px" width="25" height="18"><rect width="25" height="18" fill="#2a2a2a"/><g fill="#c8c8c8"><rect x="2" y="2" width="5" height="3"/><rect x="9" y="2" width="5" height="3"/><rect x="16" y="2" width="6" height="3"/><rect x="2" y="7" width="4" height="3"/><rect x="9" y="7" width="12" height="3"/><rect x="2" y="12" width="5" height="3"/><rect x="9" y="12" width="13" height="3"/></g></svg>
<div class="a" style="left:112px;top:46px;width:25px;height:7px;background:#3c3c3c"></div>
<div class="a" style="left:137px;top:42px;width:13px;height:13px;background:#595959;border-radius:2px"></div>
<svg class="a" style="left:138px;top:43px" width="11" height="11"><path d="M2 9 L3 6 L8 1 L10 3 L5 8 Z" fill="#d0d0d0"/></svg>
<div class="a" style="left:159px;top:0px;width:50px;height:67px;background:#070909;border:3px solid #1b2327;border-top-width:4px"></div>
<div class="a" style="left:166px;top:15px;width:35px;height:25px;background:#3b3b3b"></div>
<svg class="a" style="left:171px;top:19px" width="25" height="18"><rect width="25" height="18" fill="#d0d3d3"/><g fill="#333"><rect x="2" y="2" width="21" height="3"/><rect x="2" y="7" width="21" height="3"/><rect x="2" y="12" width="21" height="3"/></g><g fill="#d0d3d3"><rect x="6" y="2" width="1" height="13"/><rect x="11" y="2" width="1" height="13"/><rect x="16" y="2" width="1.5" height="13"/><rect x="20" y="2" width="1" height="13"/></g></svg>
<div class="a" style="left:165px;top:46px;width:25px;height:7px;background:#3c3c3c"></div>
<div class="a" style="left:190px;top:42px;width:13px;height:13px;background:#595959;border-radius:2px"></div>
<svg class="a" style="left:191px;top:43px" width="11" height="11"><path d="M2 9 L3 6 L8 1 L10 3 L5 8 Z" fill="#d0d0d0"/></svg>
<div class="a" style="left:264px;top:0px;width:50px;height:67px;background:#070909;border:3px solid #1b2327;border-top-width:4px"></div>
<div class="a" style="left:271px;top:15px;width:35px;height:25px;background:#3b3b3b"></div>
<svg class="a" style="left:276px;top:19px" width="25" height="18"><rect width="25" height="18" fill="#7a7a7a"/><rect x="3" y="2" width="19" height="14" fill="#b8b8b8" stroke="#e0e0e0" stroke-width="1"/><g stroke="#555" stroke-width="1"><path d="M7 2 L7 16 M18 2 L18 16 M7 7 L18 7 M7 11 L18 11"/></g></svg>
<div class="a" style="left:270px;top:46px;width:25px;height:7px;background:#3c3c3c"></div>
<div class="a" style="left:295px;top:42px;width:13px;height:13px;background:#595959;border-radius:2px"></div>
<svg class="a" style="left:296px;top:43px" width="11" height="11"><path d="M2 9 L3 6 L8 1 L10 3 L5 8 Z" fill="#d0d0d0"/></svg>
<div class="a" style="left:316px;top:0px;width:50px;height:67px;background:#070909;border:3px solid #1b2327;border-top-width:4px"></div>
<div class="a" style="left:323px;top:15px;width:35px;height:25px;background:#3b3b3b"></div>
<svg class="a" style="left:328px;top:19px" width="25" height="18"><rect width="25" height="18" fill="#c8cccc"/><path d="M9 2 Q13 1 14 4 L11 8 L15 12 L12 16 M11 8 L7 12 M14 6 L19 9" stroke="#555" stroke-width="1.5" fill="none"/></svg>
<div class="a" style="left:322px;top:46px;width:25px;height:7px;background:#3c3c3c"></div>
<div class="a" style="left:347px;top:42px;width:13px;height:13px;background:#595959;border-radius:2px"></div>
<svg class="a" style="left:348px;top:43px" width="11" height="11"><path d="M2 9 L3 6 L8 1 L10 3 L5 8 Z" fill="#d0d0d0"/></svg>
<div class="a" style="left:421px;top:0px;width:50px;height:67px;background:#070909;border:3px solid #1b2327;border-top-width:4px"></div>
<div class="a" style="left:428px;top:15px;width:35px;height:25px;background:#3b3b3b"></div>
<svg class="a" style="left:433px;top:19px" width="25" height="18"><rect width="25" height="18" fill="#c4c8c8"/><ellipse cx="13" cy="8" rx="7" ry="5.5" fill="none" stroke="#333" stroke-width="1.5"/><path d="M6 11 L3 15 L7 15 Z" fill="#333"/><path d="M2 3 L8 6 M20 2 L18 5 M22 12 L19 10" stroke="#666" stroke-width="1"/></svg>
<div class="a" style="left:427px;top:46px;width:25px;height:7px;background:#3c3c3c"></div>
<div class="a" style="left:452px;top:42px;width:13px;height:13px;background:#595959;border-radius:2px"></div>
<svg class="a" style="left:453px;top:43px" width="11" height="11"><path d="M2 9 L3 6 L8 1 L10 3 L5 8 Z" fill="#d0d0d0"/></svg>
<div class="a" style="left:473px;top:0px;width:50px;height:67px;background:#070909;border:3px solid #1b2327;border-top-width:4px"></div>
<div class="a" style="left:480px;top:15px;width:35px;height:25px;background:#3b3b3b"></div>
<svg class="a" style="left:485px;top:19px" width="25" height="18"><rect width="25" height="18" fill="#c8cccc"/><rect x="5" y="4" width="10" height="6" fill="none" stroke="#333" stroke-width="1.5"/><rect x="9" y="9" width="9" height="6" fill="none" stroke="#333" stroke-width="1.5"/></svg>
<div class="a" style="left:479px;top:46px;width:25px;height:7px;background:#3c3c3c"></div>
<div class="a" style="left:504px;top:42px;width:13px;height:13px;background:#595959;border-radius:2px"></div>
<svg class="a" style="left:505px;top:43px" width="11" height="11"><path d="M2 9 L3 6 L8 1 L10 3 L5 8 Z" fill="#d0d0d0"/></svg>
<div class="a" style="left:526px;top:0px;width:50px;height:67px;background:#070909;border:3px solid #1b2327;border-top-width:4px"></div>
<div class="a" style="left:533px;top:15px;width:35px;height:25px;background:#3b3b3b"></div>
<svg class="a" style="left:538px;top:19px" width="25" height="18"><rect width="25" height="18" fill="#8a8e8e"/><rect x="3" y="3" width="19" height="12" fill="#a8acac"/><path d="M5 12 L9 6 L12 10 L15 5 L20 12" stroke="#555" stroke-width="1.3" fill="none"/></svg>
<div class="a" style="left:532px;top:46px;width:25px;height:7px;background:#3c3c3c"></div>
<div class="a" style="left:557px;top:42px;width:13px;height:13px;background:#595959;border-radius:2px"></div>
<svg class="a" style="left:558px;top:43px" width="11" height="11"><path d="M2 9 L3 6 L8 1 L10 3 L5 8 Z" fill="#d0d0d0"/></svg>
<div class="a" style="left:52px;top:62px;width:6px;height:7px;background:#1b2327"></div>
<div class="a" style="left:261px;top:62px;width:6px;height:7px;background:#1b2327"></div>
<div class="a" style="left:418px;top:62px;width:6px;height:7px;background:#1b2327"></div>
<div class="a" style="left:0px;top:85px;width:20px;height:24px;background:linear-gradient(180deg,#000 0 38%,transparent 50% 78%,#000 90%),repeating-linear-gradient(70deg,#e02020 0 2px,#300 2px 4px,#a01010 4px 5px)"></div>
<div class="a" style="left:33px;top:85px;width:39px;height:24px;background:linear-gradient(180deg,#000 0 30%,transparent 42% 80%,#000 95%),radial-gradient(circle,#70f050 0 1px,transparent 1.5px) 0 0/3px 3px,repeating-linear-gradient(100deg,#208010 0 2px,#000 2px 4px)"></div>
<div class="a" style="left:86px;top:85px;width:39px;height:24px;background:linear-gradient(180deg,#000 0 30%,transparent 42% 80%,#000 95%),radial-gradient(circle,#50e0f0 0 1px,transparent 1.5px) 0 0/3px 3px,repeating-linear-gradient(100deg,#107a90 0 2px,#000 2px 4px)"></div>
<div class="a" style="left:138px;top:85px;width:39px;height:24px;background:radial-gradient(ellipse 12% 10% at 70% 50%,#a05010 0%,transparent 100%),radial-gradient(ellipse 15% 8% at 30% 75%,#804010 0%,transparent 100%),#000"></div>
<div class="a" style="left:191px;top:85px;width:39px;height:24px;background:radial-gradient(circle,#e8c040 0 2.4px,transparent 2.8px) 1px 1px/7px 6px,#28c0e8"></div>
<div class="a" style="left:243px;top:85px;width:39px;height:24px;background:repeating-conic-gradient(from 30deg,#8a8a8a 0 15deg,#0a0a0a 15deg 50deg,#c8c8c8 50deg 60deg,#000 60deg 90deg) 0 0/12px 10px"></div>
<div class="a" style="left:296px;top:85px;width:39px;height:24px;background:repeating-conic-gradient(from 10deg,#4a4a4a 0 20deg,#0a0a0a 20deg 60deg,#808080 60deg 70deg,#000 70deg 90deg) 0 0/10px 9px"></div>
<div class="a" style="left:348px;top:85px;width:39px;height:24px;background:radial-gradient(ellipse 55% 65% at 50% 55%,#f0f4ff 0%,#58a0f0 14%,#c06048 42%,#342a4a 75%,#22203a 100%)"></div>
<div class="a" style="left:400px;top:85px;width:39px;height:24px;background:#000"></div>
<div class="a" style="left:453px;top:85px;width:39px;height:24px;background:repeating-conic-gradient(from 20deg,#f0f0f0 0 25%,#000 0 50%) 0 0/5px 5px"></div>
<div class="a" style="left:505px;top:85px;width:39px;height:24px;background:radial-gradient(circle,#ccc 0 0.7px,transparent 1.1px) 0 0/7px 3px,#000"></div>
<div class="a" style="left:558px;top:85px;width:39px;height:24px;background:#000"></div>
<div class="a" style="left:400px;top:85px;width:39px;height:24px;border:4px solid #fff;border-bottom:none;background:#000"></div>
<div class="a" style="left:558px;top:96px;width:12px;height:4px;background:#ddd"></div>
<div class="a" style="left:570px;top:97px;width:4px;height:3px;background:#777"></div>
<div class="a" style="left:560px;top:101px;width:6px;height:4px;background:#666"></div>
</div>
<div class="a" style="left:208px;top:761px;width:603px;height:14px;background:#f6f6f6"></div>
<div class="a" style="left:400px;top:764px;width:89px;height:7px;background:#bdbdbd;border-radius:4px"></div>
<div class="a" style="left:811px;top:652px;width:15px;height:123px;background:#f8f8f8"></div>
<div class="a" style="left:816px;top:656px;width:6px;height:94px;background:#c9c9c9;border-radius:3px"></div><!-- ============ MASTER PREVIEW ============ -->
<div class="hdr" style="left:847px;top:46px;width:432px;height:26px"></div>
<div class="a" style="left:847px;top:71px;width:432px;height:301px;background:#1e1e1e"></div>
<div class="tab" style="left:855px;top:52px;width:98px;height:20px;line-height:19px">Master Preview</div>
<div class="a" style="left:886px;top:91px;width:354px;height:202px;border:1px solid #a0a0a0;border-radius:3px;background:#1b1b1b"></div>
<div class="a" style="left:930px;top:92px;width:266px;height:200px;background:linear-gradient(90deg,#041c08 0%,#08300f 12%,#0c3a14 60%,#0a3512 88%,#072c0d 100%);overflow:hidden">
<div class="a" style="left:16px;top:12px;width:237px;height:177px;border-radius:36px 36px 32px 32px;background:linear-gradient(180deg,#5a5a40 0%,#6a7658 18%,#7a9a84 40%,#8fb49e 60%,#9cc0ac 80%,#88ac96 100%);box-shadow:inset 0 0 4px 2px rgba(180,95,40,.65),0 0 3px 1px rgba(140,80,30,.45);filter:blur(0.8px)"></div>
<div class="a" style="left:120px;top:14px;width:130px;height:60px;background:radial-gradient(ellipse at 60% 40%,rgba(120,80,50,.7) 0%,rgba(110,80,50,.3) 60%,transparent 100%);filter:blur(2px)"></div>
<div class="a" style="left:135px;top:80px;width:130px;height:8px;background:#8a4a28;opacity:.6;transform:rotate(26deg);filter:blur(1.5px)"></div>
<div class="a" style="left:130px;top:110px;width:110px;height:9px;background:#8a4a28;opacity:.55;transform:rotate(34deg);filter:blur(1.5px)"></div>
<div class="a" style="left:100px;top:120px;width:110px;height:60px;border-radius:50%;background:radial-gradient(ellipse,rgba(185,215,200,.6) 0%,transparent 70%)"></div>
<div class="a" style="left:210px;top:20px;width:3px;height:150px;background:#b8d8c8;opacity:.3;transform:rotate(3deg)"></div>
<div class="a" style="left:16px;top:12px;width:237px;height:177px;border-radius:36px;background:repeating-linear-gradient(100deg,rgba(0,0,0,.07) 0 2px,transparent 2px 4px)"></div>
</div>
<div class="a" style="left:1206px;top:178px;font-size:27px;font-weight:bold;color:#cfcfcf">B</div>
<div class="a" style="left:1091px;top:322px;width:33px;height:33px;border:2px solid #b4b4b4;background:#161616"></div>
<div class="a" style="left:1091px;top:331px;width:33px;font-size:12.5px;font-weight:bold;color:#cfcfcf;text-align:center">120</div>
<div class="a" style="left:1134px;top:322px;width:33px;height:33px;border:2px solid #b4b4b4;background:#161616"></div>
<svg class="a" style="left:1144px;top:327px" width="12" height="11"><path d="M1 0 L11 5.5 L1 11 Z" fill="#c8c8c8"/></svg><div class="a" style="left:1134px;top:340px;width:33px;font-size:9.5px;font-weight:bold;color:#c8c8c8;text-align:center">AUTO</div>
<div class="a" style="left:1177px;top:322px;width:33px;height:33px;border:2px solid #b4b4b4;background:#161616"></div>
<svg class="a" style="left:1177px;top:322px" width="33" height="33"><path d="M8.7 18.6 L22 5.4 L27.2 10.7 L15.6 23.9 Z" fill="#c8c8c8"/><path d="M5 20.6 L5 26.6 L11 26.6 Z" fill="#c8c8c8"/></svg>
<!-- ============ LAYERS PANEL ============ -->
<div class="hdr" style="left:847px;top:391px;width:432px;height:26px"></div>
<div class="a" style="left:847px;top:416px;width:432px;height:364px;background:#1e1e1e"></div>
<div class="a" style="left:900px;top:442px;width:314px;height:3px;background:#dadada"></div>
<svg class="a" style="left:1188px;top:433px" width="12" height="9"><path d="M0 0 L12 0 L6 9 Z" fill="#dcdcdc"/></svg>
<svg class="a" style="left:1219px;top:432px" width="36" height="22"><path d="M4.5 1.2 L27.5 1.2 L33 10.5 L27.5 19.8 L4.5 19.8 Q1.2 19.8 1.2 16.5 L1.2 4.5 Q1.2 1.2 4.5 1.2 Z" fill="#151515" stroke="#c4c4c4" stroke-width="1.5"/><text x="15.5" y="16.3" font-family="Liberation Sans" font-weight="bold" font-size="15.5" fill="#f2f2f2" stroke="#f2f2f2" stroke-width="0.5" text-anchor="middle">B</text></svg>
<div class="a" style="left:893px;top:462px;width:360px;height:7px;background:#3a3c3e"></div>
<div class="a" style="left:893px;top:478px;width:360px;height:37px;background:#3d3f41"></div>
<div class="a" style="left:1017px;top:496px;width:132px;height:3px;background:#dcdcdc"></div>
<svg class="a" style="left:1143px;top:485px" width="12" height="10"><path d="M0 0 L12 0 L6 10 Z" fill="#dcdcdc"/></svg>
<div class="a" style="left:1168px;top:483px;width:25px;height:26px;background:#353638"></div>
<svg class="a" style="left:1176px;top:489px" width="11" height="14"><path d="M0 0 L11 7 L0 14 Z" fill="#4a4c4e"/></svg>
<svg class="a" style="left:1198px;top:486px" width="20" height="20"><circle cx="10" cy="10" r="9.5" fill="#3a3c3e"/><path d="M5.5 5.5 L14.5 14.5 M14.5 5.5 L5.5 14.5" stroke="#4c4e50" stroke-width="2"/></svg>
<div class="a" style="left:1233px;top:487px;width:17px;height:17px;background:#8a8a8a"></div>
<svg class="a" style="left:1235px;top:489px" width="13" height="13"><path d="M2 11 L3 8 L9 2 L11 4 L5 10 Z" fill="#111"/></svg>
<div class="a" style="left:880px;top:521px;width:376px;height:43px;background:#b4661c;border:2px solid #e08a30;border-radius:4px"></div>
<div class="a" style="left:1017px;top:542px;width:132px;height:3px;background:#dcdcdc"></div>
<div class="a" style="left:1168px;top:529px;width:25px;height:26px;background:#1a1208"></div>
<svg class="a" style="left:1176px;top:535px" width="11" height="14"><path d="M0 0 L11 7 L0 14 Z" fill="#fff"/></svg>
<svg class="a" style="left:1198px;top:532px" width="20" height="20"><circle cx="10" cy="10" r="9.5" fill="#e0c098"/><path d="M5.5 5.5 L14.5 14.5 M14.5 5.5 L5.5 14.5" stroke="#222" stroke-width="2"/></svg>
<div class="a" style="left:1233px;top:533px;width:17px;height:17px;background:#f5a030"></div>
<svg class="a" style="left:1235px;top:535px" width="13" height="13"><path d="M2 11 L3 8 L9 2 L11 4 L5 10 Z" fill="#fff"/></svg>
<div class="a" style="left:893px;top:569px;width:360px;height:37px;background:#3d3f41"></div>
<div class="a" style="left:1017px;top:587px;width:132px;height:3px;background:#dcdcdc"></div>
<svg class="a" style="left:1097px;top:576px" width="12" height="10"><path d="M0 0 L12 0 L6 10 Z" fill="#dcdcdc"/></svg>
<div class="a" style="left:1168px;top:574px;width:25px;height:26px;background:#121212"></div>
<svg class="a" style="left:1176px;top:580px" width="11" height="14"><path d="M0 0 L11 7 L0 14 Z" fill="#fff"/></svg>
<svg class="a" style="left:1198px;top:577px" width="20" height="20"><circle cx="10" cy="10" r="9.5" fill="#9a9a9a"/><path d="M5.5 5.5 L14.5 14.5 M14.5 5.5 L5.5 14.5" stroke="#222" stroke-width="2"/></svg>
<div class="a" style="left:1233px;top:578px;width:17px;height:17px;background:#8a8a8a"></div>
<svg class="a" style="left:1235px;top:580px" width="13" height="13"><path d="M2 11 L3 8 L9 2 L11 4 L5 10 Z" fill="#111"/></svg>
<div class="a" style="left:893px;top:616px;width:360px;height:37px;background:#3d3f41"></div>
<div class="a" style="left:865px;top:625px;font-size:17px;font-weight:bold;color:#f0922e">5</div>
<div class="a" style="left:900px;top:621px;width:26px;height:26px;background:#8a8a8a;color:#3c3c3c;font-size:21px;font-weight:bold;line-height:26px;text-align:center">A</div>
<div class="a" style="left:934px;top:620px;width:37px;height:28px;background:#000"></div>
<div class="a" style="left:979px;top:621px;width:26px;height:26px;background:#8a8a8a;color:#3c3c3c;font-size:21px;font-weight:bold;line-height:26px;text-align:center">B</div>
<div class="a" style="left:1017px;top:634px;width:132px;height:3px;background:#dcdcdc"></div>
<svg class="a" style="left:1057px;top:623px" width="12" height="10"><path d="M0 0 L12 0 L6 10 Z" fill="#dcdcdc"/></svg>
<div class="a" style="left:1168px;top:621px;width:25px;height:26px;background:#8a8a8a"></div>
<svg class="a" style="left:1176px;top:627px" width="11" height="14"><path d="M0 0 L11 7 L0 14 Z" fill="#3a3a3a"/></svg>
<svg class="a" style="left:1198px;top:624px" width="20" height="20"><circle cx="10" cy="10" r="9.5" fill="#9a9a9a"/><path d="M5.5 5.5 L14.5 14.5 M14.5 5.5 L5.5 14.5" stroke="#222" stroke-width="2"/></svg>
<div class="a" style="left:1233px;top:625px;width:17px;height:17px;background:#8a8a8a"></div>
<svg class="a" style="left:1235px;top:627px" width="13" height="13"><path d="M2 11 L3 8 L9 2 L11 4 L5 10 Z" fill="#111"/></svg>
<div class="a" style="left:893px;top:661px;width:360px;height:37px;background:#3d3f41"></div>
<div class="a" style="left:865px;top:670px;font-size:17px;font-weight:bold;color:#f0922e">4</div>
<div class="a" style="left:900px;top:666px;width:26px;height:26px;background:#8a8a8a;color:#3c3c3c;font-size:21px;font-weight:bold;line-height:26px;text-align:center">A</div>
<div class="a" style="left:934px;top:665px;width:37px;height:28px;background:#000"></div>
<div class="a" style="left:979px;top:666px;width:26px;height:26px;background:#8a8a8a;color:#3c3c3c;font-size:21px;font-weight:bold;line-height:26px;text-align:center">B</div>
<div class="a" style="left:1017px;top:679px;width:132px;height:3px;background:#dcdcdc"></div>
<svg class="a" style="left:1087px;top:668px" width="12" height="10"><path d="M0 0 L12 0 L6 10 Z" fill="#dcdcdc"/></svg>
<div class="a" style="left:1168px;top:666px;width:25px;height:26px;background:#8a8a8a"></div>
<svg class="a" style="left:1176px;top:672px" width="11" height="14"><path d="M0 0 L11 7 L0 14 Z" fill="#3a3a3a"/></svg>
<svg class="a" style="left:1198px;top:669px" width="20" height="20"><circle cx="10" cy="10" r="9.5" fill="#9a9a9a"/><path d="M5.5 5.5 L14.5 14.5 M14.5 5.5 L5.5 14.5" stroke="#222" stroke-width="2"/></svg>
<div class="a" style="left:1233px;top:670px;width:17px;height:17px;background:#8a8a8a"></div>
<svg class="a" style="left:1235px;top:672px" width="13" height="13"><path d="M2 11 L3 8 L9 2 L11 4 L5 10 Z" fill="#111"/></svg>
<div class="a" style="left:893px;top:706px;width:360px;height:37px;background:#3d3f41"></div>
<div class="a" style="left:865px;top:715px;font-size:17px;font-weight:bold;color:#555">3</div>
<div class="a" style="left:900px;top:711px;width:26px;height:26px;background:#8a8a8a;color:#3c3c3c;font-size:21px;font-weight:bold;line-height:26px;text-align:center">A</div>
<div class="a" style="left:934px;top:710px;width:37px;height:28px;background:#000"></div>
<div class="a" style="left:979px;top:711px;width:26px;height:26px;background:#8a8a8a;color:#3c3c3c;font-size:21px;font-weight:bold;line-height:26px;text-align:center">B</div>
<div class="a" style="left:1017px;top:724px;width:132px;height:3px;background:#dcdcdc"></div>
<svg class="a" style="left:1143px;top:713px" width="12" height="10"><path d="M0 0 L12 0 L6 10 Z" fill="#dcdcdc"/></svg>
<div class="a" style="left:1168px;top:711px;width:25px;height:26px;background:#353638"></div>
<svg class="a" style="left:1176px;top:717px" width="11" height="14"><path d="M0 0 L11 7 L0 14 Z" fill="#4a4c4e"/></svg>
<svg class="a" style="left:1198px;top:714px" width="20" height="20"><circle cx="10" cy="10" r="9.5" fill="#3a3c3e"/><path d="M5.5 5.5 L14.5 14.5 M14.5 5.5 L5.5 14.5" stroke="#4c4e50" stroke-width="2"/></svg>
<div class="a" style="left:1233px;top:715px;width:17px;height:17px;background:#8a8a8a"></div>
<svg class="a" style="left:1235px;top:717px" width="13" height="13"><path d="M2 11 L3 8 L9 2 L11 4 L5 10 Z" fill="#111"/></svg>
<div class="a" style="left:1262px;top:462px;width:15px;height:281px;background:#fafafa"></div>
<div class="a" style="left:1266px;top:603px;width:8px;height:89px;background:#c4c4c4;border-radius:4px"></div>
<div class="a" style="left:899px;top:750px;width:37px;height:20px;background:#1aa8d8;border:1px solid #6ac8e8"></div>
<svg class="a" style="left:911px;top:752px" width="14" height="16"><path d="M5 0 L10 0 L7 6 L11 7 L5 16 L7 9 L3 8 Z" fill="#112"/></svg>
<div class="a" style="left:949px;top:750px;width:37px;height:20px;background:#111;border:2px solid #8a8a8a"></div>
<div class="a" style="left:959px;top:755px;width:11px;height:11px;background:#ddd;border-radius:50%"></div>
<div class="a" style="left:965px;top:755px;width:11px;height:11px;background:#888;border-radius:50%;opacity:.8"></div>
<div class="a" style="left:1000px;top:750px;width:37px;height:20px;background:#1aa8d8;border:1px solid #6ac8e8"></div>
<svg class="a" style="left:1010px;top:752px" width="16" height="16"><path d="M8 0 L16 8 L8 16 L0 8 Z" fill="#222"/></svg>
<div class="a" style="left:1046px;top:753px;font-size:12.4px;color:#eee;text-shadow:0 0 0.4px #fff;white-space:nowrap">Copy Cell Parameters</div><!-- ============ MAPPER WINDOW ============ -->
<div class="a" style="left:262px;top:121px;width:823px;height:490px;background:#ececec;border-radius:4px 4px 0 0;box-shadow:0 6px 18px rgba(0,0,0,.55),0 0 0 1px rgba(0,0,0,.25)"></div>
<div class="a" style="left:262px;top:121px;width:823px;height:32px;background:linear-gradient(180deg,#e9e7e9 0%,#e2e0e2 32%,#e6e6e6 36%,#dadada 80%,#d3d3d3 100%);border-radius:4px 4px 0 0;border-bottom:1px solid #b9b9b9"></div>
<svg class="a" style="left:262px;top:121px" width="32" height="11"><circle cx="5.5" cy="5.2" r="3.3" fill="#f9615c"/><circle cx="14.5" cy="5.2" r="3.3" fill="#fdbc40"/><circle cx="24" cy="5.2" r="3.3" fill="#33c748"/></svg>
<div class="a" style="left:634px;top:122px;font-size:6.9px;color:#505050;line-height:9px;white-space:nowrap">ArKaos Kling-Net Mapper</div>
<svg class="a" style="left:266px;top:137px" width="10" height="10"><path d="M5 0 L6.5 3.5 L10 4 L7.3 6.5 L8 10 L5 8.3 L2 10 L2.7 6.5 L0 4 L3.5 3.5 Z" fill="#4bb34b"/></svg>
<div class="a" style="left:283px;top:133px;width:1px;height:19px;background:#cfcfcf"></div>
<div class="a" style="left:288px;top:138px;font-size:7.5px;color:#333;white-space:nowrap">Output</div>
<div class="a" style="left:318px;top:138px;width:8px;height:6px;border:1px solid #5a8ad0;background:#c0d8f0"></div>
<svg class="a" style="left:329px;top:146px" width="5" height="4"><path d="M0 0 L5 0 L2.5 4 Z" fill="#222"/></svg>
<div class="a" style="left:336px;top:133px;width:1px;height:19px;background:#cfcfcf"></div>
<div class="a" style="left:346px;top:137px;width:7px;height:8px;border:1px solid #6ab0a0;background:#d0efe0"></div>
<svg class="a" style="left:356px;top:146px" width="5" height="4"><path d="M0 0 L5 0 L2.5 4 Z" fill="#222"/></svg>
<div class="a" style="left:627px;top:133px;width:21px;height:19px;background:#c9c9c9"></div>
<div class="a" style="left:633px;top:139px;width:8px;height:7px;background:#6e6e6e"></div>
<div class="a" style="left:656px;top:139px;width:8px;height:7px;background:linear-gradient(135deg,#1a5a9a 0%,#60b0e0 50%,#1a4a7a 100%)"></div>
<div class="a" style="left:673px;top:133px;width:1px;height:19px;background:#d2d2d2"></div>
<svg class="a" style="left:683px;top:138px" width="10" height="10"><circle cx="4" cy="4" r="3" fill="none" stroke="#bbb" stroke-width="1.2"/><path d="M6 6 L9 9" stroke="#bbb" stroke-width="1.4"/></svg>
<div class="a" style="left:702px;top:138px;width:36px;height:9px;background:#fff;font-size:7px;line-height:9px;color:#222;padding-left:1px">100%</div>
<div class="a" style="left:738px;top:138px;width:8px;height:9px;background:#2d86ee;border-radius:0 2px 2px 0"></div>
<svg class="a" style="left:740px;top:141px" width="5" height="4"><path d="M0 0 L2.5 3 L5 0" stroke="#fff" fill="none" stroke-width="1"/></svg>
<svg class="a" style="left:756px;top:138px" width="10" height="10"><circle cx="4" cy="4" r="3" fill="none" stroke="#bbb" stroke-width="1.2"/><path d="M6 6 L9 9" stroke="#bbb" stroke-width="1.4"/></svg>
<div class="a" style="left:773px;top:133px;width:1px;height:19px;background:#d2d2d2"></div>
<div class="a" style="left:785px;top:137px;width:7px;height:10px;background:#bdb8a8;opacity:.7"></div>
<div class="a" style="left:806px;top:138px;width:8px;height:8px;border:1.2px solid #777;border-radius:1px"></div>
<div class="a" style="left:262px;top:153px;width:823px;height:5px;background:#f0f0f0"></div>
<div class="a" style="left:262px;top:158px;width:235px;height:443px;background:#ececec"></div>
<div class="a" style="left:263px;top:152px;width:233px;height:11px;background:linear-gradient(180deg,#e6e6e6,#d8d8d8)"></div>
<div class="a" style="left:263px;top:163px;width:233px;height:14px;background:linear-gradient(180deg,#f2f2f2,#e6e6e6);border-bottom:1px solid #d0d0d0"></div>
<div class="a" style="left:270px;top:166px;font-size:7px;color:#333;white-space:nowrap">Connected Nodes</div>
<div class="a" style="left:264px;top:177px;width:231px;height:121px;background:#fff;border:1px solid #d6d6d6"></div>
<div class="a" style="left:265px;top:178px;width:229px;height:9px;background:#f4f4f4;border-bottom:1px solid #e2e2e2"></div>
<div class="a" style="left:267px;top:179px;font-size:6px;color:#333;line-height:7px">&#9673; &#9660;</div>
<div class="a" style="left:313px;top:179px;font-size:6px;color:#444;line-height:7px;white-space:nowrap">Device name</div>
<div class="a" style="left:384px;top:179px;font-size:6px;color:#444;line-height:7px;white-space:nowrap">Manufacturer</div>
<div class="a" style="left:453px;top:179px;font-size:6px;color:#444;line-height:7px">ID</div>
<div class="a" style="left:487px;top:179px;font-size:6px;color:#444;line-height:7px">&#9660;</div>
<div class="a" style="left:282px;top:178px;width:1px;height:9px;background:#e0e0e0"></div>
<div class="a" style="left:376px;top:178px;width:1px;height:9px;background:#e0e0e0"></div>
<div class="a" style="left:425px;top:178px;width:1px;height:9px;background:#e0e0e0"></div>
<div class="a" style="left:267px;top:189px;font-size:6px;color:#333;line-height:7px">&#9673;</div>
<div class="a" style="left:286px;top:188px;font-size:6.4px;color:#222;line-height:8px;white-space:nowrap">KLINGFORCE-LED 22 (1.0.22)</div>
<div class="a" style="left:391px;top:188px;font-size:7px;color:#222;line-height:8px;white-space:nowrap">ArKaos</div>
<div class="a" style="left:445px;top:188px;font-size:7px;color:#222;line-height:8px;white-space:nowrap">13400212</div>
<div class="a" style="left:263px;top:298px;width:233px;height:4px;background:#e2e2e2"></div>
<div class="a" style="left:376px;top:299px;width:6px;height:1px;background:#aaa"></div>
<div class="a" style="left:263px;top:302px;width:233px;height:16px;background:#ececec"></div>
<div class="a" style="left:270px;top:306px;font-size:7px;color:#333;white-space:nowrap">Connected Devices</div>
<div class="a" style="left:331px;top:305px;width:149px;height:11px;background:#fff;border:1px solid #9a9a9a;border-radius:2px"></div>
<svg class="a" style="left:473px;top:308px" width="6" height="5"><path d="M0 0 L6 0 L3 5 Z" fill="#222"/></svg>
<svg class="a" style="left:482px;top:305px" width="11" height="11"><circle cx="4.5" cy="4.5" r="3.3" fill="none" stroke="#222" stroke-width="1.6"/><path d="M7 7 L10 10" stroke="#222" stroke-width="2"/></svg>
<div class="a" style="left:264px;top:318px;width:231px;height:158px;background:#fff;border:1px solid #d6d6d6"></div>
<div class="a" style="left:265px;top:319px;width:229px;height:9px;background:#f4f4f4;border-bottom:1px solid #e2e2e2"></div>
<div class="a" style="left:266px;top:320px;font-size:6px;color:#444;line-height:7px;white-space:nowrap">Product Name</div>
<div class="a" style="left:345px;top:320px;font-size:5px;color:#444;line-height:7px">&#9650;</div>
<div class="a" style="left:355px;top:320px;font-size:6px;color:#444;line-height:7px">Size</div>
<div class="a" style="left:404px;top:320px;font-size:6px;color:#444;line-height:7px">ID</div>
<div class="a" style="left:453px;top:320px;font-size:6px;color:#444;line-height:7px">IP</div>
<div class="a" style="left:266px;top:328.0px;font-size:6.6px;color:#5cc85c;line-height:8px;white-space:nowrap">DMT Pixel batten</div>
<div class="a" style="left:355px;top:328.0px;font-size:6.6px;color:#5cc85c;line-height:8px;white-space:nowrap">40x4</div>
<div class="a" style="left:404px;top:328.0px;font-size:6.6px;color:#5cc85c;line-height:8px;white-space:nowrap">409855734...</div>
<div class="a" style="left:453px;top:328.0px;font-size:6.6px;color:#5cc85c;line-height:8px;white-space:nowrap">2.0.0.43</div>
<div class="a" style="left:266px;top:336.6px;font-size:6.6px;color:#5cc85c;line-height:8px;white-space:nowrap">DMT Pixel batten</div>
<div class="a" style="left:355px;top:336.6px;font-size:6.6px;color:#5cc85c;line-height:8px;white-space:nowrap">40x4</div>
<div class="a" style="left:404px;top:336.6px;font-size:6.6px;color:#5cc85c;line-height:8px;white-space:nowrap">4284941730...</div>
<div class="a" style="left:453px;top:336.6px;font-size:6.6px;color:#5cc85c;line-height:8px;white-space:nowrap">2.0.0.53</div>
<div class="a" style="left:266px;top:345.3px;font-size:6.6px;color:#5cc85c;line-height:8px;white-space:nowrap">DMT Pixel strip</div>
<div class="a" style="left:355px;top:345.3px;font-size:6.6px;color:#5cc85c;line-height:8px;white-space:nowrap">40x1</div>
<div class="a" style="left:404px;top:345.3px;font-size:6.6px;color:#5cc85c;line-height:8px;white-space:nowrap">3930400</div>
<div class="a" style="left:453px;top:345.3px;font-size:6.6px;color:#5cc85c;line-height:8px;white-space:nowrap">2.0.0.40</div>
<div class="a" style="left:266px;top:353.9px;font-size:6.6px;color:#5cc85c;line-height:8px;white-space:nowrap">DMT Pixel strip</div>
<div class="a" style="left:355px;top:353.9px;font-size:6.6px;color:#5cc85c;line-height:8px;white-space:nowrap">40x1</div>
<div class="a" style="left:404px;top:353.9px;font-size:6.6px;color:#5cc85c;line-height:8px;white-space:nowrap">3930500</div>
<div class="a" style="left:453px;top:353.9px;font-size:6.6px;color:#5cc85c;line-height:8px;white-space:nowrap">2.0.0.40</div>
<div class="a" style="left:266px;top:362.5px;font-size:6.6px;color:#5cc85c;line-height:8px;white-space:nowrap">DMT Pixel strip</div>
<div class="a" style="left:355px;top:362.5px;font-size:6.6px;color:#5cc85c;line-height:8px;white-space:nowrap">40x1</div>
<div class="a" style="left:404px;top:362.5px;font-size:6.6px;color:#5cc85c;line-height:8px;white-space:nowrap">3930600</div>
<div class="a" style="left:453px;top:362.5px;font-size:6.6px;color:#5cc85c;line-height:8px;white-space:nowrap">2.0.0.40</div>
<div class="a" style="left:266px;top:371.1px;font-size:6.6px;color:#5cc85c;line-height:8px;white-space:nowrap">DMT Pixel strip</div>
<div class="a" style="left:355px;top:371.1px;font-size:6.6px;color:#5cc85c;line-height:8px;white-space:nowrap">40x1</div>
<div class="a" style="left:404px;top:371.1px;font-size:6.6px;color:#5cc85c;line-height:8px;white-space:nowrap">3930700</div>
<div class="a" style="left:453px;top:371.1px;font-size:6.6px;color:#5cc85c;line-height:8px;white-space:nowrap">2.0.0.40</div>
<div class="a" style="left:266px;top:379.8px;font-size:6.6px;color:#5cc85c;line-height:8px;white-space:nowrap">DMT Pixel strip</div>
<div class="a" style="left:355px;top:379.8px;font-size:6.6px;color:#5cc85c;line-height:8px;white-space:nowrap">40x1</div>
<div class="a" style="left:404px;top:379.8px;font-size:6.6px;color:#5cc85c;line-height:8px;white-space:nowrap">3930800</div>
<div class="a" style="left:453px;top:379.8px;font-size:6.6px;color:#5cc85c;line-height:8px;white-space:nowrap">2.0.0.40</div>
<div class="a" style="left:266px;top:388.4px;font-size:6.6px;color:#5cc85c;line-height:8px;white-space:nowrap">DMT Pixel strip</div>
<div class="a" style="left:355px;top:388.4px;font-size:6.6px;color:#5cc85c;line-height:8px;white-space:nowrap">40x1</div>
<div class="a" style="left:404px;top:388.4px;font-size:6.6px;color:#5cc85c;line-height:8px;white-space:nowrap">3930900</div>
<div class="a" style="left:453px;top:388.4px;font-size:6.6px;color:#5cc85c;line-height:8px;white-space:nowrap">2.0.0.40</div>
<div class="a" style="left:266px;top:397.0px;font-size:6.6px;color:#5cc85c;line-height:8px;white-space:nowrap">DMT Pixel strip</div>
<div class="a" style="left:355px;top:397.0px;font-size:6.6px;color:#5cc85c;line-height:8px;white-space:nowrap">40x1</div>
<div class="a" style="left:404px;top:397.0px;font-size:6.6px;color:#5cc85c;line-height:8px;white-space:nowrap">3931000</div>
<div class="a" style="left:453px;top:397.0px;font-size:6.6px;color:#5cc85c;line-height:8px;white-space:nowrap">2.0.0.40</div>
<div class="a" style="left:266px;top:405.7px;font-size:6.6px;color:#5cc85c;line-height:8px;white-space:nowrap">DMT Pixel strip</div>
<div class="a" style="left:355px;top:405.7px;font-size:6.6px;color:#5cc85c;line-height:8px;white-space:nowrap">40x1</div>
<div class="a" style="left:404px;top:405.7px;font-size:6.6px;color:#5cc85c;line-height:8px;white-space:nowrap">3931100</div>
<div class="a" style="left:453px;top:405.7px;font-size:6.6px;color:#5cc85c;line-height:8px;white-space:nowrap">2.0.0.40</div>
<div class="a" style="left:266px;top:414.3px;font-size:6.6px;color:#5cc85c;line-height:8px;white-space:nowrap">DMT Pixel strip</div>
<div class="a" style="left:355px;top:414.3px;font-size:6.6px;color:#5cc85c;line-height:8px;white-space:nowrap">40x1</div>
<div class="a" style="left:404px;top:414.3px;font-size:6.6px;color:#5cc85c;line-height:8px;white-space:nowrap">3931200</div>
<div class="a" style="left:453px;top:414.3px;font-size:6.6px;color:#5cc85c;line-height:8px;white-space:nowrap">2.0.0.40</div>
<div class="a" style="left:266px;top:422.9px;font-size:6.6px;color:#5cc85c;line-height:8px;white-space:nowrap">DMT Pixel strip</div>
<div class="a" style="left:355px;top:422.9px;font-size:6.6px;color:#5cc85c;line-height:8px;white-space:nowrap">40x1</div>
<div class="a" style="left:404px;top:422.9px;font-size:6.6px;color:#5cc85c;line-height:8px;white-space:nowrap">3931300</div>
<div class="a" style="left:453px;top:422.9px;font-size:6.6px;color:#5cc85c;line-height:8px;white-space:nowrap">2.0.0.40</div>
<div class="a" style="left:266px;top:431.6px;font-size:6.6px;color:#5cc85c;line-height:8px;white-space:nowrap">DMT Pixel strip</div>
<div class="a" style="left:355px;top:431.6px;font-size:6.6px;color:#5cc85c;line-height:8px;white-space:nowrap">40x1</div>
<div class="a" style="left:404px;top:431.6px;font-size:6.6px;color:#5cc85c;line-height:8px;white-space:nowrap">3931400</div>
<div class="a" style="left:453px;top:431.6px;font-size:6.6px;color:#5cc85c;line-height:8px;white-space:nowrap">2.0.0.40</div>
<div class="a" style="left:266px;top:440.2px;font-size:6.6px;color:#5cc85c;line-height:8px;white-space:nowrap">DMT Pixel strip</div>
<div class="a" style="left:355px;top:440.2px;font-size:6.6px;color:#5cc85c;line-height:8px;white-space:nowrap">40x1</div>
<div class="a" style="left:404px;top:440.2px;font-size:6.6px;color:#5cc85c;line-height:8px;white-space:nowrap">3931500</div>
<div class="a" style="left:453px;top:440.2px;font-size:6.6px;color:#5cc85c;line-height:8px;white-space:nowrap">2.0.0.40</div>
<div class="a" style="left:266px;top:448.8px;font-size:6.6px;color:#5cc85c;line-height:8px;white-space:nowrap">DMT Pixel strip</div>
<div class="a" style="left:355px;top:448.8px;font-size:6.6px;color:#5cc85c;line-height:8px;white-space:nowrap">40x1</div>
<div class="a" style="left:404px;top:448.8px;font-size:6.6px;color:#5cc85c;line-height:8px;white-space:nowrap">3931600</div>
<div class="a" style="left:453px;top:448.8px;font-size:6.6px;color:#5cc85c;line-height:8px;white-space:nowrap">2.0.0.40</div>
<div class="a" style="left:266px;top:457.5px;font-size:6.6px;color:#5cc85c;line-height:8px;white-space:nowrap">DMT Pixel strip</div>
<div class="a" style="left:355px;top:457.5px;font-size:6.6px;color:#5cc85c;line-height:8px;white-space:nowrap">40x1</div>
<div class="a" style="left:404px;top:457.5px;font-size:6.6px;color:#5cc85c;line-height:8px;white-space:nowrap">3931700</div>
<div class="a" style="left:453px;top:457.5px;font-size:6.6px;color:#5cc85c;line-height:8px;white-space:nowrap">2.0.0.40</div>
<div class="a" style="left:266px;top:466.1px;font-size:6.6px;color:#5cc85c;line-height:8px;white-space:nowrap">DMT Pixel strip</div>
<div class="a" style="left:355px;top:466.1px;font-size:6.6px;color:#5cc85c;line-height:8px;white-space:nowrap">40x1</div>
<div class="a" style="left:404px;top:466.1px;font-size:6.6px;color:#5cc85c;line-height:8px;white-space:nowrap">3931800</div>
<div class="a" style="left:453px;top:466.1px;font-size:6.6px;color:#5cc85c;line-height:8px;white-space:nowrap">2.0.0.40</div>
<div class="a" style="left:263px;top:476px;width:233px;height:3px;background:#e2e2e2"></div>
<div class="a" style="left:264px;top:479px;width:231px;height:13px;background:linear-gradient(180deg,#f2f2f2,#e6e6e6);border-bottom:1px solid #d0d0d0"></div>
<div class="a" style="left:270px;top:481px;font-size:7px;color:#333;white-space:nowrap">Mapped Objects</div>
<div class="a" style="left:264px;top:492px;width:231px;height:88px;background:#fff;border:1px solid #d6d6d6;border-top:none"></div>
<div class="a" style="left:276px;top:492.5px;font-size:7px;color:#222;line-height:8px;white-space:nowrap">Device 3930400</div>
<div class="a" style="left:276px;top:501.0px;font-size:7px;color:#222;line-height:8px;white-space:nowrap">Device 3930500</div>
<div class="a" style="left:276px;top:509.5px;font-size:7px;color:#222;line-height:8px;white-space:nowrap">Device 409855734600</div>
<div class="a" style="left:276px;top:518.0px;font-size:7px;color:#222;line-height:8px;white-space:nowrap">Device 3930600</div>
<div class="a" style="left:276px;top:526.5px;font-size:7px;color:#222;line-height:8px;white-space:nowrap">Device 3930700</div>
<div class="a" style="left:276px;top:535.0px;font-size:7px;color:#222;line-height:8px;white-space:nowrap">Device 779700</div>
<div class="a" style="left:276px;top:543.5px;font-size:7px;color:#222;line-height:8px;white-space:nowrap">Device 3930800</div>
<div class="a" style="left:276px;top:552.0px;font-size:7px;color:#222;line-height:8px;white-space:nowrap">Device 3930900</div>
<div class="a" style="left:276px;top:560.5px;font-size:7px;color:#222;line-height:8px;white-space:nowrap">Device 3931000</div>
<div class="a" style="left:276px;top:569.0px;font-size:7px;color:#222;line-height:8px;white-space:nowrap">Device 3931100</div>
<div class="a" style="left:344px;top:588px;width:70px;height:10px;background:#fff;border:1px solid #c8c8c8;border-radius:2px;font-size:6.5px;line-height:8px;text-align:center;color:#222">Create Template...</div>
<div class="a" style="left:497px;top:158px;width:1px;height:443px;background:#c6c6c6"></div>
<div class="a" style="left:498px;top:158px;width:587px;height:443px;background:#ededed"></div>
<div class="a" style="left:503px;top:158px;width:577px;height:336px;background:#cfd2d6"></div>
<div class="a" style="left:505px;top:487px;width:7px;height:6px;background:#a8a8a8"></div>
<div class="a" style="left:514px;top:487px;width:7px;height:6px;background:#a8a8a8"></div>
<div class="a" style="left:262px;top:600px;width:823px;height:11px;background:linear-gradient(180deg,#d8d8d8 0%,#ececec 15%,#e2e2e2 60%,#cfcfcf 100%)"></div>
<div class="a" style="left:624px;top:163px;width:46px;height:216px;background-color:#f6f4ff;background-image:linear-gradient(90deg,rgba(120,120,200,.16) 1px,transparent 1px),linear-gradient(0deg,rgba(120,120,200,.16) 1px,transparent 1px);background-size:3px 3px"></div>
<div class="a" style="left:670px;top:163px;width:50px;height:216px;background-color:#fbf22c;background-image:linear-gradient(90deg,rgba(110,110,160,.22) 1px,transparent 1px),linear-gradient(0deg,rgba(110,110,160,.22) 1px,transparent 1px);background-size:3px 3px"></div>
<div class="a" style="left:720px;top:163px;width:47px;height:216px;background-color:#2ee6fa;background-image:linear-gradient(90deg,rgba(110,110,160,.22) 1px,transparent 1px),linear-gradient(0deg,rgba(110,110,160,.22) 1px,transparent 1px);background-size:3px 3px"></div>
<div class="a" style="left:767px;top:163px;width:50px;height:216px;background-color:#36e03c;background-image:linear-gradient(90deg,rgba(110,110,160,.22) 1px,transparent 1px),linear-gradient(0deg,rgba(110,110,160,.22) 1px,transparent 1px);background-size:3px 3px"></div>
<div class="a" style="left:817px;top:163px;width:47px;height:216px;background-color:#ee36f2;background-image:linear-gradient(90deg,rgba(110,110,160,.22) 1px,transparent 1px),linear-gradient(0deg,rgba(110,110,160,.22) 1px,transparent 1px);background-size:3px 3px"></div>
<div class="a" style="left:864px;top:163px;width:49px;height:216px;background-color:#fc1c2c;background-image:linear-gradient(90deg,rgba(110,110,160,.22) 1px,transparent 1px),linear-gradient(0deg,rgba(110,110,160,.22) 1px,transparent 1px);background-size:3px 3px"></div>
<div class="a" style="left:913px;top:163px;width:46px;height:216px;background-color:#1e26fc;background-image:linear-gradient(90deg,rgba(110,110,160,.22) 1px,transparent 1px),linear-gradient(0deg,rgba(110,110,160,.22) 1px,transparent 1px);background-size:3px 3px"></div>
<div class="a" style="left:624px;top:379px;width:46px;height:29px;background-color:#1e26fc;background-image:linear-gradient(90deg,rgba(110,110,160,.22) 1px,transparent 1px),linear-gradient(0deg,rgba(110,110,160,.22) 1px,transparent 1px);background-size:3px 3px"></div>
<div class="a" style="left:670px;top:379px;width:50px;height:29px;background-color:#080812;background-image:linear-gradient(90deg,rgba(140,140,175,.42) 1px,transparent 1px),linear-gradient(0deg,rgba(140,140,175,.42) 1px,transparent 1px);background-size:3px 3px"></div>
<div class="a" style="left:720px;top:379px;width:47px;height:29px;background-color:#ee36f2;background-image:linear-gradient(90deg,rgba(110,110,160,.22) 1px,transparent 1px),linear-gradient(0deg,rgba(110,110,160,.22) 1px,transparent 1px);background-size:3px 3px"></div>
<div class="a" style="left:767px;top:379px;width:50px;height:29px;background-color:#080812;background-image:linear-gradient(90deg,rgba(140,140,175,.42) 1px,transparent 1px),linear-gradient(0deg,rgba(140,140,175,.42) 1px,transparent 1px);background-size:3px 3px"></div>
<div class="a" style="left:817px;top:379px;width:47px;height:29px;background-color:#2ee6fa;background-image:linear-gradient(90deg,rgba(110,110,160,.22) 1px,transparent 1px),linear-gradient(0deg,rgba(110,110,160,.22) 1px,transparent 1px);background-size:3px 3px"></div>
<div class="a" style="left:864px;top:379px;width:49px;height:29px;background-color:#080812;background-image:linear-gradient(90deg,rgba(140,140,175,.42) 1px,transparent 1px),linear-gradient(0deg,rgba(140,140,175,.42) 1px,transparent 1px);background-size:3px 3px"></div>
<div class="a" style="left:913px;top:379px;width:46px;height:29px;background-color:#f6f4ff;background-image:linear-gradient(90deg,rgba(120,120,200,.16) 1px,transparent 1px),linear-gradient(0deg,rgba(120,120,200,.16) 1px,transparent 1px);background-size:3px 3px"></div>
<div class="a" style="left:624px;top:408px;width:59px;height:82px;background-color:#1e5a94;background-image:linear-gradient(90deg,rgba(110,110,160,.22) 1px,transparent 1px),linear-gradient(0deg,rgba(110,110,160,.22) 1px,transparent 1px);background-size:3px 3px"></div>
<div class="a" style="left:683px;top:408px;width:63px;height:82px;background-color:#f6f4ff;background-image:linear-gradient(90deg,rgba(120,120,200,.16) 1px,transparent 1px),linear-gradient(0deg,rgba(120,120,200,.16) 1px,transparent 1px);background-size:3px 3px"></div>
<div class="a" style="left:746px;top:408px;width:59px;height:82px;background-color:#6a2ab8;background-image:linear-gradient(90deg,rgba(110,110,160,.22) 1px,transparent 1px),linear-gradient(0deg,rgba(110,110,160,.22) 1px,transparent 1px);background-size:3px 3px"></div>
<div class="a" style="left:805px;top:408px;width:154px;height:82px;background-color:#080812;background-image:linear-gradient(90deg,rgba(140,140,175,.42) 1px,transparent 1px),linear-gradient(0deg,rgba(140,140,175,.42) 1px,transparent 1px);background-size:3px 3px"></div>
<div class="a" style="left:631px;top:175px;width:19px;height:164px;border:1.5px solid #505050"></div>
<div class="a" style="left:916px;top:170px;width:19px;height:165px;border:2px solid #141470;border-radius:3px"></div>
<div class="a" style="left:703px;top:170.5px;width:169px;height:6px;border:1.8px solid rgba(25,12,12,.8);border-radius:3px"></div>
<div class="a" style="left:703px;top:184.2px;width:169px;height:6px;border:1.8px solid rgba(25,12,12,.8);border-radius:3px"></div>
<div class="a" style="left:703px;top:197.8px;width:169px;height:6px;border:1.8px solid rgba(25,12,12,.8);border-radius:3px"></div>
<div class="a" style="left:703px;top:211.4px;width:169px;height:6px;border:1.8px solid rgba(25,12,12,.8);border-radius:3px"></div>
<div class="a" style="left:703px;top:225.1px;width:169px;height:6px;border:1.8px solid rgba(25,12,12,.8);border-radius:3px"></div>
<div class="a" style="left:703px;top:238.8px;width:169px;height:6px;border:1.8px solid rgba(25,12,12,.8);border-radius:3px"></div>
<div class="a" style="left:703px;top:252.4px;width:169px;height:6px;border:1.8px solid rgba(25,12,12,.8);border-radius:3px"></div>
<div class="a" style="left:703px;top:266.1px;width:169px;height:6px;border:1.8px solid rgba(25,12,12,.8);border-radius:3px"></div>
<div class="a" style="left:703px;top:279.7px;width:169px;height:6px;border:1.8px solid rgba(25,12,12,.8);border-radius:3px"></div>
<div class="a" style="left:703px;top:293.4px;width:169px;height:6px;border:1.8px solid rgba(25,12,12,.8);border-radius:3px"></div>
<div class="a" style="left:703px;top:307.0px;width:169px;height:6px;border:1.8px solid rgba(25,12,12,.8);border-radius:3px"></div>
<div class="a" style="left:703px;top:320.6px;width:169px;height:6px;border:1.8px solid rgba(25,12,12,.8);border-radius:3px"></div>
<div class="a" style="left:703px;top:334.3px;width:169px;height:6px;border:1.8px solid rgba(25,12,12,.8);border-radius:3px"></div>
<div class="a" style="left:703px;top:348.0px;width:169px;height:6px;border:1.8px solid rgba(25,12,12,.8);border-radius:3px"></div>
<div class="a" style="left:703px;top:361.6px;width:169px;height:6px;border:1.8px solid rgba(25,12,12,.8);border-radius:3px"></div>
<div class="a" style="left:703px;top:375.2px;width:169px;height:6px;border:1.8px solid rgba(25,12,12,.8);border-radius:3px"></div>
<div class="a" style="left:690px;top:440px;width:52px;height:50px;border:1.5px solid #333;border-bottom:none"></div>
<div class="a" style="left:811px;top:440px;width:53px;height:50px;border:2.5px solid #050508;border-radius:3px;border-bottom:none"></div></body></html>
